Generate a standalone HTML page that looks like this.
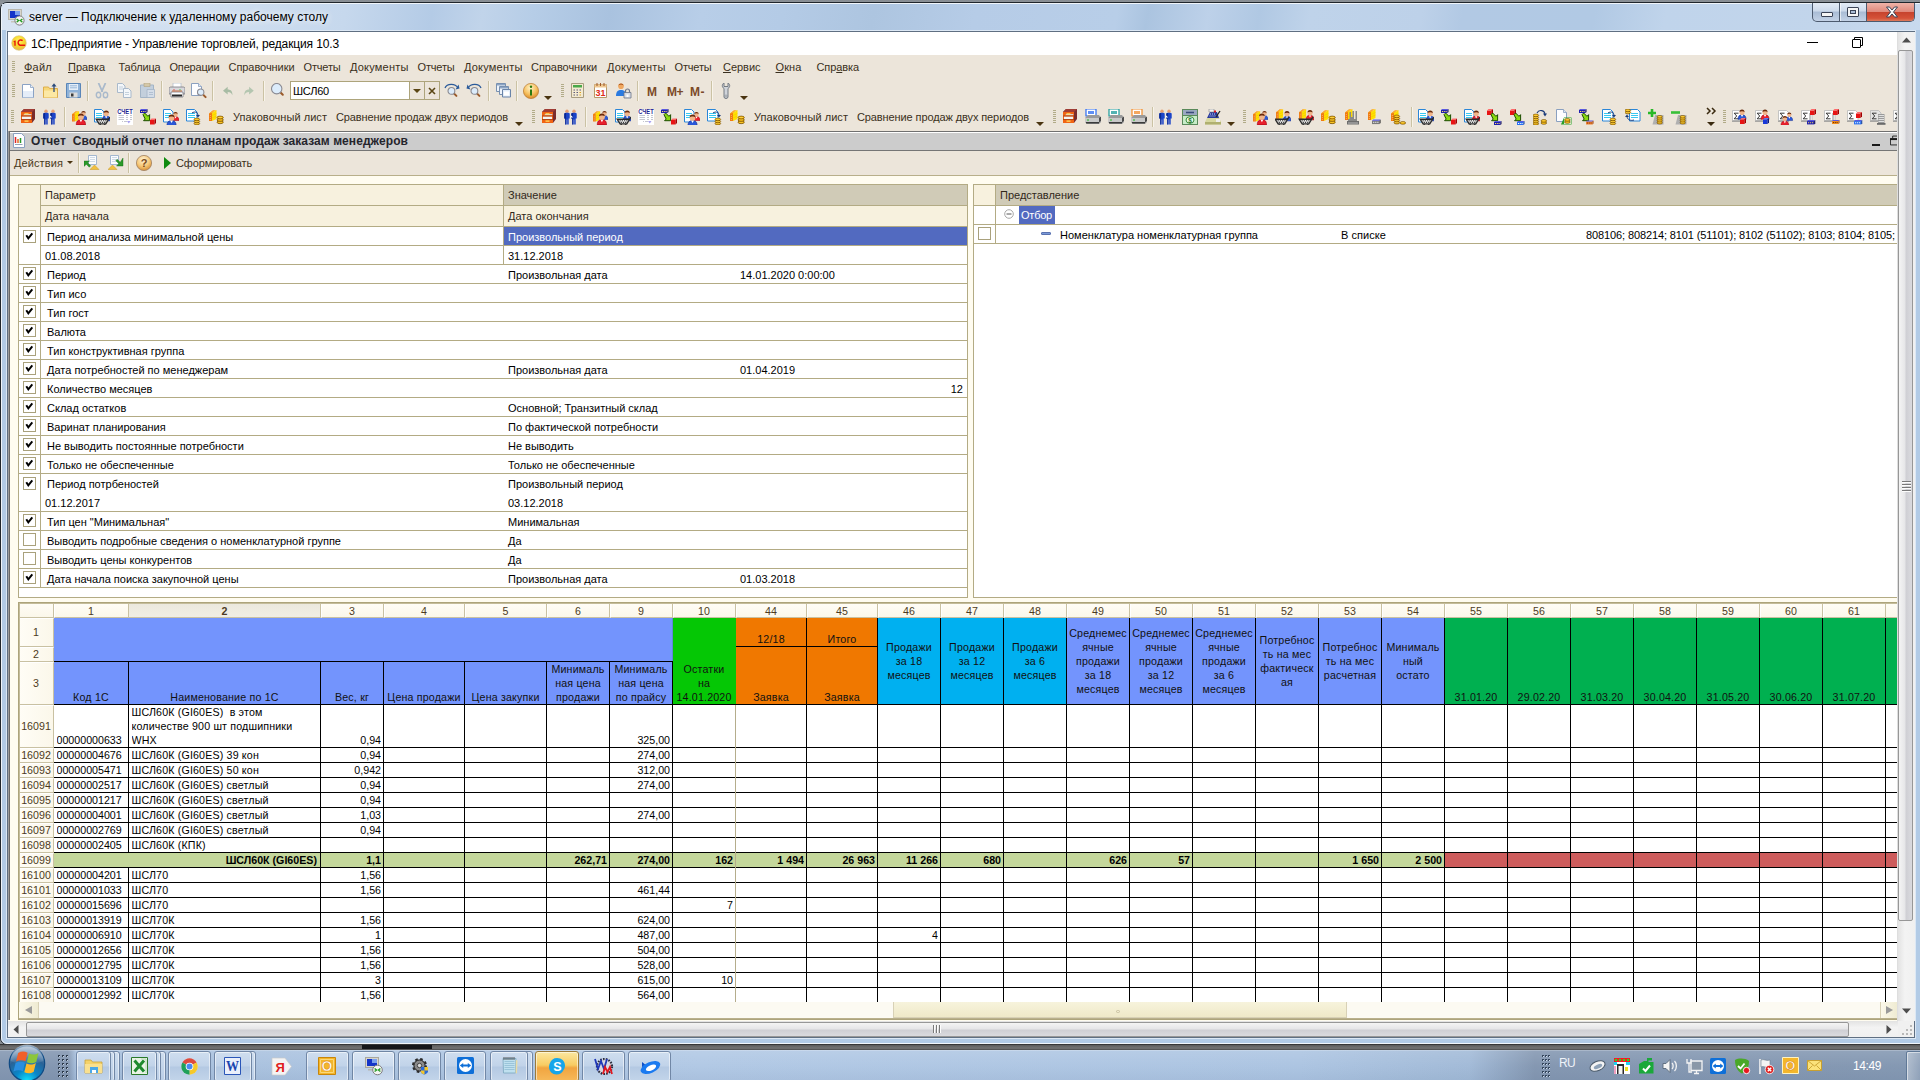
<!DOCTYPE html>
<html lang="ru"><head><meta charset="utf-8"><title>1С:Предприятие - Управление торговлей, редакция 10.3</title>
<style>
html,body{margin:0;padding:0;}
body{width:1920px;height:1080px;overflow:hidden;position:relative;background:#868c92;font-family:"Liberation Sans",sans-serif;font-size:11px;}
body div{position:absolute;box-sizing:border-box;}
.t{white-space:pre;}
svg{position:absolute;overflow:visible;}
.c{white-space:nowrap;font-size:10.67px;line-height:14px;color:#000;overflow:hidden;}
.ch{font-size:10.67px;line-height:14px;color:#111;text-align:center;display:flex;flex-direction:column;overflow:hidden;}
.ch span{display:block;white-space:nowrap;letter-spacing:.18px;}

</style></head>
<body>
<div style="left:0px;top:0px;width:1920px;height:3px;background:linear-gradient(180deg,#868c92,#8f959b);"></div>
<div style="left:0px;top:2px;width:1926px;height:1043px;background:#b2cbe6;border:1px solid #20262c;border-radius:7px;"></div>
<div style="left:1px;top:3px;width:1924px;height:1041px;border:1px solid rgba(255,255,255,.8);border-radius:6px;"></div>
<div style="left:2px;top:4px;width:1918px;height:26px;background:linear-gradient(100deg,#d8e4f3 0px,#d0dff0 200px,#c6d8ed 340px,#b4cbe6 425px,#c1d4ea 475px,#b6cde7 525px,#a9c2df 600px,#b8cee8 690px,#b4cbe6 770px,#adc5e0 860px,#b6cce7 960px,#b8cee8 1100px,#abc4e0 1130px,#bdd1e9 1190px,#b0c8e3 1240px,#bfd3ea 1290px,#bdd1e9 1400px,#b2c9e4 1440px,#b1c9e4 1570px,#c0d4eb 1640px,#c2d5eb 1800px,#cadbef 1918px);"></div>
<div style="left:6px;top:30px;width:1910px;height:1009px;border:1px solid #dce8f5;"></div>
<svg style="left:8px;top:9px" width="17" height="17" viewBox="0 0 17 17">
<rect x="0.5" y="0.5" width="13" height="10" fill="#d7d5cc" stroke="#b9b7ad"/>
<rect x="2" y="2" width="10" height="7" fill="#1434c8"/>
<rect x="7" y="2" width="5" height="4" fill="#7aa0ee"/>
<rect x="3" y="12" width="7" height="1.5" fill="#c8c6bd"/>
<circle cx="11.5" cy="11.5" r="4.6" fill="#f4f4f4" stroke="#7d7d7d"/>
<path d="M8.6 10l2 1.6-2 1.6M14.4 10l-2 1.6 2 1.6" stroke="#1f9a1f" stroke-width="1.3" fill="none"/>
</svg>
<div class="t" style="left:29px;top:9px;height:16px;line-height:16px;font-size:12px;color:#000;letter-spacing:0.007px;text-shadow:0 0 6px rgba(255,255,255,.9),0 0 10px rgba(255,255,255,.7);">server — Подключение к удаленному рабочему столу</div>
<div style="left:1812px;top:3px;width:103px;height:19px;border:1px solid #4c5a6e;border-top:none;border-radius:0 0 5px 5px;background:linear-gradient(180deg,#e3ebf5 0%,#ccd9ea 45%,#a9bcd5 50%,#c3d2e6 100%);overflow:hidden;"><div style="left:26px;top:0;width:1px;height:19px;background:#4c5a6e"></div><div style="left:27px;top:0;width:1px;height:19px;background:rgba(255,255,255,.6)"></div><div style="left:53px;top:0;width:1px;height:19px;background:#4c5a6e"></div><div style="left:54px;top:0;width:48px;height:19px;background:linear-gradient(180deg,#efb3a8 0%,#e08a7c 45%,#c7442e 50%,#d55238 80%,#e08a6a 100%)"></div><div style="left:8px;top:9px;width:12px;height:5px;background:#f5f5f5;border:1px solid #3b4356;border-radius:1px"></div><div style="left:34px;top:4px;width:12px;height:10px;background:#f5f5f5;border:1px solid #3b4356;border-radius:1px"></div><div style="left:37px;top:7px;width:6px;height:4px;background:#a9bcd5;border:1px solid #3b4356"></div></div>
<svg style="left:1885px;top:6px" width="14" height="12" viewBox="0 0 14 12"><path d="M1.5 1h3l2.5 3 2.5-3h3l-4 5 4 5h-3L7 8l-2.500 3h-3l4-5z" fill="#f7f7f7" stroke="#3b4356" stroke-width="1"/></svg>
<div style="left:7px;top:31px;width:1908px;height:1007px;background:#fff;border:1px solid #5f6f82;"></div>
<div style="left:8px;top:32px;width:1890px;height:23px;background:#fff;"></div>
<svg style="left:11px;top:35px" width="16" height="16" viewBox="0 0 16 16">
<defs><radialGradient id="g1c" cx="50%" cy="35%" r="65%"><stop offset="0" stop-color="#fff56a"/><stop offset=".55" stop-color="#f7d72a"/><stop offset="1" stop-color="#e9b64c"/></radialGradient></defs>
<circle cx="8" cy="8" r="7.3" fill="url(#g1c)" stroke="#d9c27a" stroke-width=".6"/>
<path d="M2.2 6.8l1.6-1.2h.9v5.2H3.300V7.200z" fill="#e8170c"/>
<path d="M11.600 5.600A2.700 2.700 0 1 0 9.000 10.200h5.200" stroke="#e8170c" stroke-width="1.500" fill="none"/>
</svg>
<div class="t" style="left:31px;top:35.5px;height:16px;line-height:16px;font-size:12px;color:#000;letter-spacing:-0.130px;">1С:Предприятие - Управление торговлей, редакция 10.3</div>
<div style="left:1807px;top:42px;width:11px;height:1px;background:#000;"></div>
<div style="left:1852px;top:39px;width:9px;height:9px;border:1px solid #000;background:#fff;border-radius:1px;"></div>
<svg style="left:1854px;top:37px" width="9" height="9" viewBox="0 0 9 9"><path d="M0.500 2V.5H8.500V8.500H7" fill="none" stroke="#000"/></svg>
<div style="left:8px;top:55px;width:1890px;height:76px;background:#ece5da;"></div>
<div style="left:12px;top:61px;width:3px;height:1px;background:#b1ab88;"></div>
<div style="left:12px;top:63px;width:3px;height:1px;background:#b1ab88;"></div>
<div style="left:12px;top:65px;width:3px;height:1px;background:#b1ab88;"></div>
<div style="left:12px;top:67px;width:3px;height:1px;background:#b1ab88;"></div>
<div style="left:12px;top:69px;width:3px;height:1px;background:#b1ab88;"></div>
<div style="left:12px;top:71px;width:3px;height:1px;background:#b1ab88;"></div>
<div class="t" style="left:24px;top:59px;height:16px;line-height:16px;font-size:11px;color:#3a3020;letter-spacing:0.239px"><u>Ф</u>айл</div>
<div class="t" style="left:68px;top:59px;height:16px;line-height:16px;font-size:11px;color:#3a3020;letter-spacing:-0.026px"><u>П</u>равка</div>
<div class="t" style="left:118.5px;top:59px;height:16px;line-height:16px;font-size:11px;color:#3a3020;letter-spacing:-0.161px">Таблица</div>
<div class="t" style="left:169.5px;top:59px;height:16px;line-height:16px;font-size:11px;color:#3a3020;letter-spacing:-0.182px">Операции</div>
<div class="t" style="left:228.5px;top:59px;height:16px;line-height:16px;font-size:11px;color:#3a3020;letter-spacing:-0.058px">Справочники</div>
<div class="t" style="left:303.5px;top:59px;height:16px;line-height:16px;font-size:11px;color:#3a3020;letter-spacing:-0.171px">Отчеты</div>
<div class="t" style="left:350px;top:59px;height:16px;line-height:16px;font-size:11px;color:#3a3020;letter-spacing:0.200px">Документы</div>
<div class="t" style="left:417.5px;top:59px;height:16px;line-height:16px;font-size:11px;color:#3a3020;letter-spacing:-0.171px">Отчеты</div>
<div class="t" style="left:464px;top:59px;height:16px;line-height:16px;font-size:11px;color:#3a3020;letter-spacing:0.200px">Документы</div>
<div class="t" style="left:531px;top:59px;height:16px;line-height:16px;font-size:11px;color:#3a3020;letter-spacing:-0.058px">Справочники</div>
<div class="t" style="left:607px;top:59px;height:16px;line-height:16px;font-size:11px;color:#3a3020;letter-spacing:0.200px">Документы</div>
<div class="t" style="left:674.5px;top:59px;height:16px;line-height:16px;font-size:11px;color:#3a3020;letter-spacing:-0.171px">Отчеты</div>
<div class="t" style="left:723px;top:59px;height:16px;line-height:16px;font-size:11px;color:#3a3020;letter-spacing:-0.028px"><u>С</u>ервис</div>
<div class="t" style="left:775.5px;top:59px;height:16px;line-height:16px;font-size:11px;color:#3a3020;letter-spacing:0.110px"><u>О</u>кна</div>
<div class="t" style="left:816.5px;top:59px;height:16px;line-height:16px;font-size:11px;color:#3a3020;letter-spacing:-0.093px">Спр<u>а</u>вка</div>
<div style="left:12px;top:84px;width:3px;height:1px;background:#b1ab88;"></div>
<div style="left:12px;top:86px;width:3px;height:1px;background:#b1ab88;"></div>
<div style="left:12px;top:88px;width:3px;height:1px;background:#b1ab88;"></div>
<div style="left:12px;top:90px;width:3px;height:1px;background:#b1ab88;"></div>
<div style="left:12px;top:92px;width:3px;height:1px;background:#b1ab88;"></div>
<div style="left:12px;top:94px;width:3px;height:1px;background:#b1ab88;"></div>
<div style="left:12px;top:96px;width:3px;height:1px;background:#b1ab88;"></div>
<svg style="left:20px;top:83px;overflow:hidden" width="16" height="16" viewBox="0 0 16 16"><g transform="translate(2 1) scale(1)"><path d="M.5 .5h8l3 3v10h-11z" fill="#fff" stroke="#8aa2c4" stroke-width="1"/><path d="M1 7h10v6.500h-10z" fill="#dfe9f6" opacity=".8"/><path d="M8.500 .5v3h3" fill="#eaf0f8" stroke="#8aa2c4" stroke-width=".8"/></g></svg>
<svg style="left:43px;top:83px;overflow:hidden" width="16" height="16" viewBox="0 0 16 16"><path d="M.5 4h5l1 1.500h8v9h-14z" fill="#f7d778" stroke="#dba840" stroke-width=".9"/><path d="M1 7.500h13v7h-13z" fill="#fce8a4"/><path d="M11 9v-7" stroke="#2a4a7a" stroke-width="1.300"/><path d="M8.500 3.500l2.500-3.300 2.500 3.300z" fill="#2a4a7a"/></svg>
<svg style="left:66px;top:83px;overflow:hidden" width="16" height="16" viewBox="0 0 16 16"><path d="M.5 .5h14v14h-14z" fill="#8fb2d8" stroke="#5a86b8"/><path d="M3 1h9v6h-9z" fill="#e6eff8"/><path d="M4 2.800h7M4 4.800h7" stroke="#8fb0d4" stroke-width=".9"/><path d="M3.500 9.500h8v5h-8z" fill="#dcdcdc"/><path d="M5 10.500h2.500v3h-2.500z" fill="#3a3a3a"/></svg>
<div style="left:87px;top:81px;width:1px;height:20px;background:#cbc2a4;"></div>
<div style="left:88px;top:81px;width:1px;height:20px;background:#f8f4ea;"></div>
<svg style="left:95px;top:83px;overflow:hidden" width="16" height="16" viewBox="0 0 16 16"><path d="M3.500 0l4 9M10.500 0l-4 9" stroke="#a9b9cb" stroke-width="1.800"/><ellipse cx="3.500" cy="12" rx="2.200" ry="2.800" fill="none" stroke="#a9b9cb" stroke-width="1.400"/><ellipse cx="10.500" cy="12" rx="2.200" ry="2.800" fill="none" stroke="#a9b9cb" stroke-width="1.400"/></svg>
<svg style="left:117px;top:83px;overflow:hidden" width="16" height="16" viewBox="0 0 16 16"><path d="M.5 .5h5l2.500 2.500v6.500h-7.500z" fill="#f4f7fa" stroke="#a9b9cb"/><path d="M6.500 5.500h5l2.500 2.500v6.500h-7.500z" fill="#f4f7fa" stroke="#a9b9cb"/><path d="M2 4h4M2 6h4M8 9.500h4M8 11.500h4" stroke="#b8c6d6" stroke-width=".8"/></svg>
<svg style="left:140px;top:83px;overflow:hidden" width="16" height="16" viewBox="0 0 16 16"><path d="M.5 2h13v12.500h-13z" fill="#c3cfdc" stroke="#a3b4c6"/><path d="M4 0h6v3.500h-6z" fill="#d4c8a8" stroke="#b4a888" stroke-width=".7"/><path d="M7 6.500h7.500v8h-7.500z" fill="#d4dde8" stroke="#a3b4c6" stroke-width=".8"/><path d="M9 9.500h4M9 11.500h4" stroke="#a9b9cb" stroke-width=".8"/></svg>
<div style="left:161px;top:81px;width:1px;height:20px;background:#cbc2a4;"></div>
<div style="left:162px;top:81px;width:1px;height:20px;background:#f8f4ea;"></div>
<svg style="left:169px;top:83px;overflow:hidden" width="16" height="16" viewBox="0 0 16 16"><path d="M4 0h8v6h-8z" fill="#fff" stroke="#b8c0cc" stroke-width=".8"/><path d="M0 5.500c0-1 1-1.500 2-1.500h12c1 0 2 .5 2 1.500v5.500h-16z" fill="#d8d8dc" stroke="#6a6a72" stroke-width=".7"/><path d="M2 9h12v5h-12z" fill="#fff" stroke="#6a6a72" stroke-width=".7"/><path d="M3 11.500h10v2h-10z" fill="#2a2a2a"/><path d="M3 8h10" stroke="#c86a3a" stroke-width="1"/><path d="M10.500 6.800h1" stroke="#20c020" stroke-width="1"/><path d="M4.500 6.800h1" stroke="#e02020" stroke-width="1"/></svg>
<svg style="left:191px;top:83px;overflow:hidden" width="16" height="16" viewBox="0 0 16 16"><g transform="translate(0 0) scale(1)"><path d="M.5 .5h7l3 3v9h-10z" fill="#fdfdff" stroke="#8aa0c0" stroke-width="1"/><path d="M7.5 .5v3h3" fill="#dfe8f4" stroke="#8aa0c0" stroke-width=".8"/></g><g transform="translate(6.5 6)"><path d="M5.1 5.1l3 3" stroke="#9a5a2a" stroke-width="2" stroke-linecap="round"/><circle cx="3.2" cy="3.2" r="3.2" fill="#dcecfb" stroke="#8a8a92" stroke-width="1.100"/></g></svg>
<div style="left:212px;top:81px;width:1px;height:20px;background:#cbc2a4;"></div>
<div style="left:213px;top:81px;width:1px;height:20px;background:#f8f4ea;"></div>
<svg style="left:222px;top:85px;overflow:hidden" width="16" height="16" viewBox="0 0 16 16"><path transform="translate(1 1) scale(.85)" d="M0 5.500l5.500-4.500v3c4 0 6 2.500 5.500 7-1-3-2.500-4-5.500-4v3z" fill="#a8bca4"/></svg>
<svg style="left:243px;top:85px;overflow:hidden" width="16" height="16" viewBox="0 0 16 16"><path transform="translate(1 1) scale(.85)" d="M11.500 5.500l-5.500-4.500v3c-4 0-6 2.500-5.500 7 1-3 2.500-4 5.500-4v3z" fill="#b4c6b0"/></svg>
<div style="left:263px;top:81px;width:1px;height:20px;background:#cbc2a4;"></div>
<div style="left:264px;top:81px;width:1px;height:20px;background:#f8f4ea;"></div>
<svg style="left:271px;top:83px;overflow:hidden" width="16" height="16" viewBox="0 0 16 16"><g transform="translate(0.5 0.5)"><path d="M8.3 8.3l3 3" stroke="#9a5a2a" stroke-width="2" stroke-linecap="round"/><circle cx="5.2" cy="5.2" r="5.2" fill="#dcecfb" stroke="#8a8a92" stroke-width="1.100"/></g></svg>
<div style="left:290px;top:81px;width:150px;height:19px;background:#fff;border:1px solid #ada47b;"></div>
<div style="left:409px;top:82px;width:30px;height:17px;background:#ece5da;"></div>
<div style="left:409px;top:82px;width:1px;height:17px;background:#ada47b;"></div>
<div style="left:424px;top:82px;width:1px;height:17px;background:#ada47b;"></div>
<div class="t" style="left:293px;top:83px;height:16px;line-height:16px;font-size:11px;color:#000;letter-spacing:-0.223px;">ШСЛ60</div>
<svg style="left:413px;top:89px" width="8" height="4" viewBox="0 0 8 4"><path d="M0 0h8l-4 4z" fill="#5a4614"/></svg>
<svg style="left:428px;top:87px" width="8" height="8" viewBox="0 0 8 8"><path d="M1 1l6 6M7 1l-6 6" stroke="#5a4614" stroke-width="1.600"/></svg>
<svg style="left:444px;top:83px;overflow:hidden" width="16" height="16" viewBox="0 0 16 16"><path d="M1 5c2-4.500 10-5 13 0" fill="none" stroke="#2a5a9a" stroke-width="1.300"/><path d="M11.500 6.500l4-1-1-4z" fill="#2a5a9a"/><g transform="translate(4 4.5)"><path d="M5.4 5.4l3 3" stroke="#9a5a2a" stroke-width="2" stroke-linecap="round"/><circle cx="3.4" cy="3.4" r="3.4" fill="#dcecfb" stroke="#8a8a92" stroke-width="1.100"/></g></svg>
<svg style="left:466px;top:83px;overflow:hidden" width="16" height="16" viewBox="0 0 16 16"><path d="M2 5c3-5 11-4.500 13 0" fill="none" stroke="#2a5a9a" stroke-width="1.300"/><path d="M4.500 6.500l-4-1 1-4z" fill="#2a5a9a"/><g transform="translate(5 4.5)"><path d="M5.4 5.4l3 3" stroke="#9a5a2a" stroke-width="2" stroke-linecap="round"/><circle cx="3.4" cy="3.4" r="3.4" fill="#dcecfb" stroke="#8a8a92" stroke-width="1.100"/></g></svg>
<div style="left:488px;top:81px;width:1px;height:20px;background:#cbc2a4;"></div>
<div style="left:489px;top:81px;width:1px;height:20px;background:#f8f4ea;"></div>
<svg style="left:496px;top:83px;overflow:hidden" width="16" height="16" viewBox="0 0 16 16"><path d="M.5 .5h9v8h-9z" fill="#eef3fa" stroke="#7890b0"/><path d="M1 1h8v1.500h-8z" fill="#8ca4c4"/><path d="M3.500 3.500h9v8h-9z" fill="#eef3fa" stroke="#7890b0"/><path d="M4 4h8v1.500h-8z" fill="#8ca4c4"/><path d="M6.500 6.500h8v7.500h-8z" fill="#e3edf9" stroke="#6a84a8"/><path d="M8 8.500h5v4h-5z" fill="#fff"/></svg>
<div style="left:516px;top:81px;width:1px;height:20px;background:#cbc2a4;"></div>
<div style="left:517px;top:81px;width:1px;height:20px;background:#f8f4ea;"></div>
<svg style="left:523px;top:83px;overflow:hidden" width="16" height="16" viewBox="0 0 16 16"><defs><radialGradient id="gi" cx="45%" cy="30%" r="70%"><stop offset="0" stop-color="#fff3c8"/><stop offset=".6" stop-color="#f6c060"/><stop offset="1" stop-color="#d88a28"/></radialGradient></defs><circle cx="8" cy="8" r="7.600" fill="url(#gi)" stroke="#b87a30" stroke-width=".7"/><path d="M8 6.500v6" stroke="#2a7a10" stroke-width="2"/><circle cx="8" cy="3.800" r="1.200" fill="#2a7a10"/></svg>
<svg style="left:544px;top:96px" width="8" height="4" viewBox="0 0 8 4"><path d="M0 0h8l-4 4z" fill="#4a3410"/></svg>
<div style="left:561px;top:84px;width:3px;height:1px;background:#b1ab88;"></div>
<div style="left:561px;top:86px;width:3px;height:1px;background:#b1ab88;"></div>
<div style="left:561px;top:88px;width:3px;height:1px;background:#b1ab88;"></div>
<div style="left:561px;top:90px;width:3px;height:1px;background:#b1ab88;"></div>
<div style="left:561px;top:92px;width:3px;height:1px;background:#b1ab88;"></div>
<div style="left:561px;top:94px;width:3px;height:1px;background:#b1ab88;"></div>
<div style="left:561px;top:96px;width:3px;height:1px;background:#b1ab88;"></div>
<svg style="left:571px;top:83px;overflow:hidden" width="16" height="16" viewBox="0 0 16 16"><path d="M.5 .5h12v14h-12z" fill="#f4ead0" stroke="#a89c80"/><path d="M2 2h9v2.500h-9z" fill="#4aa84a"/><path d="M2.500 7h1.500M5.500 7h1.500M8.500 7h1.500M2.500 9.500h1.500M5.500 9.500h1.500M2.500 12h1.500M5.500 12h1.500" stroke="#5a5a7a" stroke-width="1.200"/><path d="M8.500 9.500h1.500M8.500 12h1.500" stroke="#d8a020" stroke-width="1.200"/></svg>
<svg style="left:594px;top:83px;overflow:hidden" width="16" height="16" viewBox="0 0 16 16"><path d="M.5 1.500h12v13h-12z" fill="#fff" stroke="#b89868"/><path d="M.5 1.500h12v3h-12z" fill="#f0c890"/><path d="M3 0v3M6.500 0v3M10 0v3" stroke="#a05828" stroke-width="1"/><text x="1.500" y="13" font-family="Liberation Sans,sans-serif" font-size="9" font-weight="bold" fill="#e02818" textLength="10" lengthAdjust="spacingAndGlyphs">31</text></svg>
<svg style="left:616px;top:83px;overflow:hidden" width="16" height="16" viewBox="0 0 16 16"><circle cx="5" cy="3.200" r="2.800" fill="#f0a860"/><path d="M2.300 2.500a2.800 2.800 0 0 1 5.400 0c-1.500-1.200-4-1.200-5.400 0z" fill="#a04810"/><path d="M0 13c0-4.500 2-6 5-6s5 1.500 5 6z" fill="#2a7ae0"/><path d="M8 9.500h7v5.500h-7z" fill="#d8dce4" stroke="#6a7488" stroke-width=".8"/><path d="M9.500 9.500v-1.500a2 2 0 0 1 4 0v1.500" fill="none" stroke="#6a7488" stroke-width="1.200"/><path d="M10.500 11.500h2v2.500h-2z" fill="#fff"/></svg>
<div style="left:637px;top:81px;width:1px;height:20px;background:#cbc2a4;"></div>
<div style="left:638px;top:81px;width:1px;height:20px;background:#f8f4ea;"></div>
<div class="t" style="left:647px;top:83.5px;height:16px;line-height:16px;font-size:12px;color:#7b4a28;font-weight:bold;letter-spacing:-0.997px;">M</div>
<div class="t" style="left:667px;top:83.5px;height:16px;line-height:16px;font-size:12px;color:#7b4a28;font-weight:bold;letter-spacing:-0.502px;">M+</div>
<div class="t" style="left:690px;top:83.5px;height:16px;line-height:16px;font-size:12px;color:#7b4a28;font-weight:bold;letter-spacing:0.503px;">M-</div>
<div style="left:711px;top:81px;width:1px;height:20px;background:#cbc2a4;"></div>
<div style="left:712px;top:81px;width:1px;height:20px;background:#f8f4ea;"></div>
<svg style="left:721px;top:83px;overflow:hidden" width="16" height="16" viewBox="0 0 16 16"><path d="M3 0c-2 1-2.500 4 0 5.500v8.500c0 2 4 2 4 0v-8.500c2.500-1.500 2-4.500 0-5.500v3.500h-4z" fill="#d0d4da" stroke="#6a7078" stroke-width=".9"/><circle cx="5" cy="13" r="1" fill="#fff" stroke="#6a7078" stroke-width=".6"/></svg>
<svg style="left:740px;top:96px" width="8" height="4" viewBox="0 0 8 4"><path d="M0 0h8l-4 4z" fill="#4a3410"/></svg>
<div style="left:11px;top:110px;width:3px;height:1px;background:#b1ab88;"></div>
<div style="left:11px;top:112px;width:3px;height:1px;background:#b1ab88;"></div>
<div style="left:11px;top:114px;width:3px;height:1px;background:#b1ab88;"></div>
<div style="left:11px;top:116px;width:3px;height:1px;background:#b1ab88;"></div>
<div style="left:11px;top:118px;width:3px;height:1px;background:#b1ab88;"></div>
<div style="left:11px;top:120px;width:3px;height:1px;background:#b1ab88;"></div>
<div style="left:11px;top:122px;width:3px;height:1px;background:#b1ab88;"></div>
<svg style="left:20px;top:109px;overflow:hidden" width="16" height="16" viewBox="0 0 16 16"><path d="M1 3l3-3h11v10l-3 4h-11z" fill="#7a2c2c"/><path d="M1 3h11v11h-11z" fill="#f06414"/><path d="M1 3l3-3h11l-3 3z" fill="#a03c34"/><path d="M2 7.500h9v2.600h-9z" fill="#f4f4f4"/><path d="M3 6.200l1.500-1.200h7l-.5 1.200z" fill="#d8d8d8"/><path d="M4.500 4.800h4M4.500 12.200h4" stroke="#ffe060" stroke-width="1.200"/><path d="M1 7h11M1 10.500h11" stroke="#8a2a08" stroke-width=".6"/></svg>
<svg style="left:42px;top:109px;overflow:hidden" width="16" height="16" viewBox="0 0 16 16"><g transform="translate(1 0.5) scale(1)"><g transform="translate(0 0)"><circle cx="3" cy="1.800" r="1.700" fill="#e8a070"/><path d="M.3 4.500c0-1 .8-1.200 2.700-1.200s2.700.2 2.700 1.200v4.500h-1v6h-1.500v-5h-.5v5h-1.500v-6h-1z" fill="#1c44c8"/><path d="M.3 4.500v4.500h1v6h.8v-11.600c-1.200 0-1.800.4-1.800 1.100z" fill="#0c2890"/></g><g transform="translate(7 0)"><circle cx="3" cy="1.800" r="1.700" fill="#e8a070"/><path d="M.3 4.500c0-1 .8-1.200 2.700-1.200s2.700.2 2.700 1.200v4.500h-1v6h-1.500v-5h-.5v5h-1.500v-6h-1z" fill="#1c44c8"/><path d="M.3 4.500v4.500h1v6h.8v-11.600c-1.200 0-1.800.4-1.800 1.100z" fill="#0c2890"/></g><path d="M6 8l1.500-2 1.500 2z" fill="#fff"/></g></svg>
<div style="left:64px;top:107px;width:1px;height:20px;background:#cbc2a4;"></div>
<div style="left:65px;top:107px;width:1px;height:20px;background:#f8f4ea;"></div>
<svg style="left:71px;top:109px;overflow:hidden" width="16" height="16" viewBox="0 0 16 16"><g transform="translate(1 2) scale(0.95)"><path d="M0 3.500l4.500-3.500v2l-1.500 1v8h-3z" fill="#f07c12"/><path d="M3 3l4.500-3v9l-4.500 2z" fill="#ffe000"/><path d="M0 3.500l4.500-3.500h3l-4.500 3z" fill="#ffb830" opacity=".85"/><path d="M.8 5.500h1.200M.8 7.500h1.200M.8 9.500h1.200" stroke="#ffb060" stroke-width=".8"/><path d="M3 5.500l4.500-2M3 8l4.500-2" stroke="#f0c000" stroke-width=".5"/></g><g transform="translate(9 1.5) scale(1.0)"><path d="M0 9c0-3 1.500-4 3.500-4s3.500 1 3.500 4z" fill="#2a58d8" stroke="#102890" stroke-width=".5"/><circle cx="3.500" cy="3" r="2.200" fill="#f2b58a"/><path d="M1.300 2.600a2.200 2.200 0 0 1 4.400 0c-1-1-3.400-1-4.400 0z" fill="#6a2a0c"/><path d="M2.500 5.200l1 1.800 1-1.800z" fill="#fff"/></g><g transform="translate(5.3 4) scale(1.32)"><path d="M0 9c0-3 1.500-4 3.500-4s3.500 1 3.500 4z" fill="#e8202c" stroke="#a00010" stroke-width=".5"/><circle cx="3.500" cy="3" r="2.200" fill="#f2b58a"/><path d="M1.300 2.600a2.200 2.200 0 0 1 4.400 0c-1-1-3.400-1-4.400 0z" fill="#6a2a0c"/><path d="M2.500 5.200l1 1.800 1-1.800z" fill="#fff"/></g></svg>
<svg style="left:94px;top:109px;overflow:hidden" width="16" height="16" viewBox="0 0 16 16"><g transform="translate(0 0) scale(1)"><path d="M.5 .5h7l2.500 2.500v10h-9.5z" fill="#fff" stroke="#2a86d8" stroke-width="1"/><path d="M2 4.5h6" stroke="#38c8f0" stroke-width="1"/><path d="M2 6.5h6" stroke="#38c8f0" stroke-width="1"/><path d="M2 8.5h6" stroke="#38c8f0" stroke-width="1"/></g><g transform="translate(8 1) scale(1.2)"><path d="M0 9c0-3 1.500-4 3.500-4s3.500 1 3.500 4z" fill="#2a58d8" stroke="#102890" stroke-width=".5"/><circle cx="3.500" cy="3" r="2.200" fill="#f2b58a"/><path d="M1.300 2.600a2.200 2.200 0 0 1 4.400 0c-1-1-3.400-1-4.400 0z" fill="#6a2a0c"/><path d="M2.500 5.200l1 1.800 1-1.800z" fill="#fff"/></g><g transform="translate(2 10) scale(1.4)"><path d="M.2 .2h8.800l-2 3.300h-4.800z" fill="#f2f2f2" stroke="#2c2c2c" stroke-width="1"/><path d="M1.800 1.200h.9M3.400 1.200h.9M5 1.200h.9M6.600 1.200h.9M2.600 2.400h.9M4.200 2.400h.9M5.800 2.400h.9" stroke="#3a3a3a" stroke-width=".75"/><circle cx="3" cy="4.300" r=".65" fill="#2c2c2c"/><circle cx="6.200" cy="4.300" r=".65" fill="#2c2c2c"/><path d="M8.600 .4l1.600-1.900" stroke="#2c2c2c" stroke-width="1"/></g></svg>
<svg style="left:117px;top:109px;overflow:hidden" width="16" height="16" viewBox="0 0 16 16"><path d="M0 0h16v16h-16z" fill="#fff"/><text x=".3" y="5.300" font-family="Liberation Sans,sans-serif" font-weight="bold" font-size="6.800" fill="#1c1c90" textLength="15.400" lengthAdjust="spacingAndGlyphs">СЧЕТ</text><path d="M1.500 6.500h5.500M9 6.500h2M13 6.500h2M1.500 8.500h5.500M9 8.500h2M13 8.500h2M1.500 10.500h5.500M9 10.500h2M13 10.500h2M5 12.500h1M7 12.500h3" stroke="#c4c6d0" stroke-width="1"/><path d="M10 12h3.500l-1.750 2.500z" fill="#a8a0f0"/></svg>
<svg style="left:140px;top:109px;overflow:hidden" width="16" height="16" viewBox="0 0 16 16"><g transform="translate(0 0) scale(1)"><path d="M0 1h6.500v3h-6.500z" fill="#2020b0"/><path d="M0 1l1-1h6.500l-1 1z" fill="#5a5ae0"/><path d="M6.500 1l1-1v3l-1 1z" fill="#080850"/><path d="M1 2.500h1M2.800 2.500h1M4.600 2.500h1" stroke="#ffe060" stroke-width="1"/></g><g transform="translate(3 4) scale(1.1)"><path d="M0 1.500l1.500-1.500 3 3 1.500-1.500v5.500h-5.500l1.500-1.500z" fill="#8ada10" stroke="#1a4a00" stroke-width=".9"/></g><g transform="translate(10 9.5) scale(1)"><path d="M0 1.500h4.500v4.500h-4.500z" fill="#e81414"/><path d="M0 1.500l1.500-1.500h4.500l-1.500 1.500z" fill="#ff6a6a"/><path d="M4.500 1.500l1.500-1.500v4.500l-1.500 1.500z" fill="#a00000"/></g></svg>
<svg style="left:163px;top:109px;overflow:hidden" width="16" height="16" viewBox="0 0 16 16"><g transform="translate(0 0) scale(1)"><path d="M.5 .5h7l2.500 2.500v10h-9.5z" fill="#fff" stroke="#2a86d8" stroke-width="1"/><path d="M2 4.5h6" stroke="#38c8f0" stroke-width="1"/><path d="M2 6.5h6" stroke="#38c8f0" stroke-width="1"/><path d="M2 8.5h6" stroke="#38c8f0" stroke-width="1"/></g><g transform="translate(9 2.5) scale(1.0)"><path d="M0 9c0-3 1.500-4 3.500-4s3.500 1 3.500 4z" fill="#e8202c" stroke="#a00010" stroke-width=".5"/><circle cx="3.500" cy="3" r="2.200" fill="#f2b58a"/><path d="M1.300 2.600a2.200 2.200 0 0 1 4.400 0c-1-1-3.400-1-4.400 0z" fill="#6a2a0c"/><path d="M2.500 5.200l1 1.800 1-1.800z" fill="#fff"/></g><g transform="translate(4 5) scale(1.3)"><path d="M0 9c0-3 1.500-4 3.500-4s3.500 1 3.500 4z" fill="#2a58d8" stroke="#102890" stroke-width=".5"/><circle cx="3.500" cy="3" r="2.200" fill="#f2b58a"/><path d="M1.300 2.600a2.200 2.200 0 0 1 4.400 0c-1-1-3.400-1-4.400 0z" fill="#6a2a0c"/><path d="M2.500 5.200l1 1.800 1-1.800z" fill="#fff"/></g></svg>
<svg style="left:186px;top:109px;overflow:hidden" width="16" height="16" viewBox="0 0 16 16"><g transform="translate(0 0) scale(1)"><path d="M.5 .5h8l2.500 2.500v9h-10.5z" fill="#fff" stroke="#2a86d8" stroke-width="1"/><path d="M2 4.5h7" stroke="#38c8f0" stroke-width="1"/><path d="M2 6.5h7" stroke="#38c8f0" stroke-width="1"/><path d="M2 8.5h7" stroke="#38c8f0" stroke-width="1"/></g><path d="M6 4c3-2 6-1 6 3" fill="none" stroke="#1a3a7a" stroke-width="1"/><path d="M10 6l2 2.500 2-2.500z" fill="#1a3a7a"/><g transform="translate(8 9) scale(0.95)"><ellipse cx="3" cy="5.9" rx="3" ry="1.400" fill="#f6b400" stroke="#5a3800" stroke-width=".6"/><path d="M1.200 5.7h3.600" stroke="#ffe880" stroke-width=".6"/><ellipse cx="3" cy="3.7" rx="3" ry="1.400" fill="#f6b400" stroke="#5a3800" stroke-width=".6"/><path d="M1.200 3.5h3.600" stroke="#ffe880" stroke-width=".6"/><ellipse cx="3" cy="1.5" rx="3" ry="1.400" fill="#f6b400" stroke="#5a3800" stroke-width=".6"/><path d="M1.200 1.3h3.600" stroke="#ffe880" stroke-width=".6"/></g></svg>
<svg style="left:209px;top:109px;overflow:hidden" width="16" height="16" viewBox="0 0 16 16"><g transform="translate(0 1) scale(1)"><path d="M0 3.500l4.500-3.500v2l-1.500 1v8h-3z" fill="#f07c12"/><path d="M3 3l4.500-3v9l-4.500 2z" fill="#ffe000"/><path d="M0 3.500l4.500-3.500h3l-4.500 3z" fill="#ffb830" opacity=".85"/><path d="M.8 5.500h1.200M.8 7.500h1.200M.8 9.500h1.200" stroke="#ffb060" stroke-width=".8"/><path d="M3 5.500l4.500-2M3 8l4.500-2" stroke="#f0c000" stroke-width=".5"/></g><g transform="translate(8 7) scale(1.05)"><ellipse cx="3" cy="5.9" rx="3" ry="1.400" fill="#f6b400" stroke="#5a3800" stroke-width=".6"/><path d="M1.200 5.7h3.600" stroke="#ffe880" stroke-width=".6"/><ellipse cx="3" cy="3.7" rx="3" ry="1.400" fill="#f6b400" stroke="#5a3800" stroke-width=".6"/><path d="M1.200 3.5h3.600" stroke="#ffe880" stroke-width=".6"/><ellipse cx="3" cy="1.5" rx="3" ry="1.400" fill="#f6b400" stroke="#5a3800" stroke-width=".6"/><path d="M1.200 1.3h3.600" stroke="#ffe880" stroke-width=".6"/></g></svg>
<div class="t" style="left:233px;top:109px;height:16px;line-height:16px;font-size:11px;color:#3a3020;letter-spacing:0.048px;">Упаковочный лист</div>
<div class="t" style="left:336px;top:109px;height:16px;line-height:16px;font-size:11px;color:#3a3020;letter-spacing:-0.106px;">Сравнение продаж двух периодов</div>
<svg style="left:515px;top:122px" width="8" height="4" viewBox="0 0 8 4"><path d="M0 0h8l-4 4z" fill="#4a3410"/></svg>
<div style="left:532px;top:110px;width:3px;height:1px;background:#b1ab88;"></div>
<div style="left:532px;top:112px;width:3px;height:1px;background:#b1ab88;"></div>
<div style="left:532px;top:114px;width:3px;height:1px;background:#b1ab88;"></div>
<div style="left:532px;top:116px;width:3px;height:1px;background:#b1ab88;"></div>
<div style="left:532px;top:118px;width:3px;height:1px;background:#b1ab88;"></div>
<div style="left:532px;top:120px;width:3px;height:1px;background:#b1ab88;"></div>
<div style="left:532px;top:122px;width:3px;height:1px;background:#b1ab88;"></div>
<svg style="left:541px;top:109px;overflow:hidden" width="16" height="16" viewBox="0 0 16 16"><path d="M1 3l3-3h11v10l-3 4h-11z" fill="#7a2c2c"/><path d="M1 3h11v11h-11z" fill="#f06414"/><path d="M1 3l3-3h11l-3 3z" fill="#a03c34"/><path d="M2 7.500h9v2.600h-9z" fill="#f4f4f4"/><path d="M3 6.200l1.500-1.200h7l-.5 1.200z" fill="#d8d8d8"/><path d="M4.500 4.800h4M4.500 12.200h4" stroke="#ffe060" stroke-width="1.200"/><path d="M1 7h11M1 10.500h11" stroke="#8a2a08" stroke-width=".6"/></svg>
<svg style="left:563px;top:109px;overflow:hidden" width="16" height="16" viewBox="0 0 16 16"><g transform="translate(1 0.5) scale(1)"><g transform="translate(0 0)"><circle cx="3" cy="1.800" r="1.700" fill="#e8a070"/><path d="M.3 4.500c0-1 .8-1.200 2.700-1.200s2.700.2 2.700 1.200v4.500h-1v6h-1.500v-5h-.5v5h-1.500v-6h-1z" fill="#1c44c8"/><path d="M.3 4.500v4.500h1v6h.8v-11.600c-1.200 0-1.800.4-1.800 1.100z" fill="#0c2890"/></g><g transform="translate(7 0)"><circle cx="3" cy="1.800" r="1.700" fill="#e8a070"/><path d="M.3 4.500c0-1 .8-1.200 2.700-1.200s2.700.2 2.700 1.200v4.500h-1v6h-1.500v-5h-.5v5h-1.500v-6h-1z" fill="#1c44c8"/><path d="M.3 4.500v4.500h1v6h.8v-11.600c-1.200 0-1.800.4-1.800 1.100z" fill="#0c2890"/></g><path d="M6 8l1.500-2 1.500 2z" fill="#fff"/></g></svg>
<div style="left:585px;top:107px;width:1px;height:20px;background:#cbc2a4;"></div>
<div style="left:586px;top:107px;width:1px;height:20px;background:#f8f4ea;"></div>
<svg style="left:592px;top:109px;overflow:hidden" width="16" height="16" viewBox="0 0 16 16"><g transform="translate(1 2) scale(0.95)"><path d="M0 3.500l4.500-3.500v2l-1.500 1v8h-3z" fill="#f07c12"/><path d="M3 3l4.500-3v9l-4.500 2z" fill="#ffe000"/><path d="M0 3.500l4.500-3.500h3l-4.500 3z" fill="#ffb830" opacity=".85"/><path d="M.8 5.500h1.200M.8 7.500h1.200M.8 9.500h1.200" stroke="#ffb060" stroke-width=".8"/><path d="M3 5.500l4.500-2M3 8l4.500-2" stroke="#f0c000" stroke-width=".5"/></g><g transform="translate(9 1.5) scale(1.0)"><path d="M0 9c0-3 1.500-4 3.500-4s3.500 1 3.500 4z" fill="#2a58d8" stroke="#102890" stroke-width=".5"/><circle cx="3.500" cy="3" r="2.200" fill="#f2b58a"/><path d="M1.300 2.600a2.200 2.200 0 0 1 4.400 0c-1-1-3.400-1-4.400 0z" fill="#6a2a0c"/><path d="M2.500 5.200l1 1.800 1-1.800z" fill="#fff"/></g><g transform="translate(5.3 4) scale(1.32)"><path d="M0 9c0-3 1.500-4 3.500-4s3.500 1 3.500 4z" fill="#e8202c" stroke="#a00010" stroke-width=".5"/><circle cx="3.500" cy="3" r="2.200" fill="#f2b58a"/><path d="M1.300 2.600a2.200 2.200 0 0 1 4.400 0c-1-1-3.400-1-4.400 0z" fill="#6a2a0c"/><path d="M2.500 5.200l1 1.800 1-1.800z" fill="#fff"/></g></svg>
<svg style="left:615px;top:109px;overflow:hidden" width="16" height="16" viewBox="0 0 16 16"><g transform="translate(0 0) scale(1)"><path d="M.5 .5h7l2.500 2.500v10h-9.5z" fill="#fff" stroke="#2a86d8" stroke-width="1"/><path d="M2 4.5h6" stroke="#38c8f0" stroke-width="1"/><path d="M2 6.5h6" stroke="#38c8f0" stroke-width="1"/><path d="M2 8.5h6" stroke="#38c8f0" stroke-width="1"/></g><g transform="translate(8 1) scale(1.2)"><path d="M0 9c0-3 1.500-4 3.500-4s3.500 1 3.500 4z" fill="#2a58d8" stroke="#102890" stroke-width=".5"/><circle cx="3.500" cy="3" r="2.200" fill="#f2b58a"/><path d="M1.300 2.600a2.200 2.200 0 0 1 4.400 0c-1-1-3.400-1-4.400 0z" fill="#6a2a0c"/><path d="M2.500 5.200l1 1.800 1-1.800z" fill="#fff"/></g><g transform="translate(2 10) scale(1.4)"><path d="M.2 .2h8.800l-2 3.300h-4.800z" fill="#f2f2f2" stroke="#2c2c2c" stroke-width="1"/><path d="M1.800 1.200h.9M3.400 1.200h.9M5 1.200h.9M6.600 1.200h.9M2.600 2.400h.9M4.200 2.400h.9M5.800 2.400h.9" stroke="#3a3a3a" stroke-width=".75"/><circle cx="3" cy="4.300" r=".65" fill="#2c2c2c"/><circle cx="6.200" cy="4.300" r=".65" fill="#2c2c2c"/><path d="M8.600 .4l1.600-1.900" stroke="#2c2c2c" stroke-width="1"/></g></svg>
<svg style="left:638px;top:109px;overflow:hidden" width="16" height="16" viewBox="0 0 16 16"><path d="M0 0h16v16h-16z" fill="#fff"/><text x=".3" y="5.300" font-family="Liberation Sans,sans-serif" font-weight="bold" font-size="6.800" fill="#1c1c90" textLength="15.400" lengthAdjust="spacingAndGlyphs">СЧЕТ</text><path d="M1.500 6.500h5.500M9 6.500h2M13 6.500h2M1.500 8.500h5.500M9 8.500h2M13 8.500h2M1.500 10.500h5.500M9 10.500h2M13 10.500h2M5 12.500h1M7 12.500h3" stroke="#c4c6d0" stroke-width="1"/><path d="M10 12h3.500l-1.750 2.500z" fill="#a8a0f0"/></svg>
<svg style="left:661px;top:109px;overflow:hidden" width="16" height="16" viewBox="0 0 16 16"><g transform="translate(0 0) scale(1)"><path d="M0 1h6.500v3h-6.500z" fill="#2020b0"/><path d="M0 1l1-1h6.500l-1 1z" fill="#5a5ae0"/><path d="M6.500 1l1-1v3l-1 1z" fill="#080850"/><path d="M1 2.500h1M2.800 2.500h1M4.600 2.500h1" stroke="#ffe060" stroke-width="1"/></g><g transform="translate(3 4) scale(1.1)"><path d="M0 1.500l1.500-1.500 3 3 1.500-1.500v5.500h-5.500l1.500-1.500z" fill="#8ada10" stroke="#1a4a00" stroke-width=".9"/></g><g transform="translate(10 9.5) scale(1)"><path d="M0 1.500h4.500v4.500h-4.500z" fill="#e81414"/><path d="M0 1.500l1.500-1.500h4.500l-1.500 1.500z" fill="#ff6a6a"/><path d="M4.500 1.500l1.500-1.500v4.500l-1.500 1.500z" fill="#a00000"/></g></svg>
<svg style="left:684px;top:109px;overflow:hidden" width="16" height="16" viewBox="0 0 16 16"><g transform="translate(0 0) scale(1)"><path d="M.5 .5h7l2.500 2.500v10h-9.5z" fill="#fff" stroke="#2a86d8" stroke-width="1"/><path d="M2 4.5h6" stroke="#38c8f0" stroke-width="1"/><path d="M2 6.5h6" stroke="#38c8f0" stroke-width="1"/><path d="M2 8.5h6" stroke="#38c8f0" stroke-width="1"/></g><g transform="translate(9 2.5) scale(1.0)"><path d="M0 9c0-3 1.500-4 3.500-4s3.500 1 3.500 4z" fill="#e8202c" stroke="#a00010" stroke-width=".5"/><circle cx="3.500" cy="3" r="2.200" fill="#f2b58a"/><path d="M1.300 2.600a2.200 2.200 0 0 1 4.400 0c-1-1-3.400-1-4.400 0z" fill="#6a2a0c"/><path d="M2.500 5.200l1 1.800 1-1.800z" fill="#fff"/></g><g transform="translate(4 5) scale(1.3)"><path d="M0 9c0-3 1.500-4 3.500-4s3.500 1 3.500 4z" fill="#2a58d8" stroke="#102890" stroke-width=".5"/><circle cx="3.500" cy="3" r="2.200" fill="#f2b58a"/><path d="M1.300 2.600a2.200 2.200 0 0 1 4.400 0c-1-1-3.400-1-4.400 0z" fill="#6a2a0c"/><path d="M2.500 5.200l1 1.800 1-1.800z" fill="#fff"/></g></svg>
<svg style="left:707px;top:109px;overflow:hidden" width="16" height="16" viewBox="0 0 16 16"><g transform="translate(0 0) scale(1)"><path d="M.5 .5h8l2.500 2.500v9h-10.5z" fill="#fff" stroke="#2a86d8" stroke-width="1"/><path d="M2 4.5h7" stroke="#38c8f0" stroke-width="1"/><path d="M2 6.5h7" stroke="#38c8f0" stroke-width="1"/><path d="M2 8.5h7" stroke="#38c8f0" stroke-width="1"/></g><path d="M6 4c3-2 6-1 6 3" fill="none" stroke="#1a3a7a" stroke-width="1"/><path d="M10 6l2 2.500 2-2.500z" fill="#1a3a7a"/><g transform="translate(8 9) scale(0.95)"><ellipse cx="3" cy="5.9" rx="3" ry="1.400" fill="#f6b400" stroke="#5a3800" stroke-width=".6"/><path d="M1.200 5.7h3.600" stroke="#ffe880" stroke-width=".6"/><ellipse cx="3" cy="3.7" rx="3" ry="1.400" fill="#f6b400" stroke="#5a3800" stroke-width=".6"/><path d="M1.200 3.5h3.600" stroke="#ffe880" stroke-width=".6"/><ellipse cx="3" cy="1.5" rx="3" ry="1.400" fill="#f6b400" stroke="#5a3800" stroke-width=".6"/><path d="M1.200 1.3h3.600" stroke="#ffe880" stroke-width=".6"/></g></svg>
<svg style="left:730px;top:109px;overflow:hidden" width="16" height="16" viewBox="0 0 16 16"><g transform="translate(0 1) scale(1)"><path d="M0 3.500l4.500-3.500v2l-1.500 1v8h-3z" fill="#f07c12"/><path d="M3 3l4.500-3v9l-4.500 2z" fill="#ffe000"/><path d="M0 3.500l4.500-3.500h3l-4.500 3z" fill="#ffb830" opacity=".85"/><path d="M.8 5.500h1.200M.8 7.500h1.200M.8 9.500h1.200" stroke="#ffb060" stroke-width=".8"/><path d="M3 5.500l4.500-2M3 8l4.500-2" stroke="#f0c000" stroke-width=".5"/></g><g transform="translate(8 7) scale(1.05)"><ellipse cx="3" cy="5.9" rx="3" ry="1.400" fill="#f6b400" stroke="#5a3800" stroke-width=".6"/><path d="M1.200 5.7h3.600" stroke="#ffe880" stroke-width=".6"/><ellipse cx="3" cy="3.7" rx="3" ry="1.400" fill="#f6b400" stroke="#5a3800" stroke-width=".6"/><path d="M1.200 3.5h3.600" stroke="#ffe880" stroke-width=".6"/><ellipse cx="3" cy="1.5" rx="3" ry="1.400" fill="#f6b400" stroke="#5a3800" stroke-width=".6"/><path d="M1.200 1.3h3.600" stroke="#ffe880" stroke-width=".6"/></g></svg>
<div class="t" style="left:754px;top:109px;height:16px;line-height:16px;font-size:11px;color:#3a3020;letter-spacing:0.048px;">Упаковочный лист</div>
<div class="t" style="left:857px;top:109px;height:16px;line-height:16px;font-size:11px;color:#3a3020;letter-spacing:-0.106px;">Сравнение продаж двух периодов</div>
<svg style="left:1036px;top:122px" width="8" height="4" viewBox="0 0 8 4"><path d="M0 0h8l-4 4z" fill="#4a3410"/></svg>
<div style="left:1053px;top:110px;width:3px;height:1px;background:#b1ab88;"></div>
<div style="left:1053px;top:112px;width:3px;height:1px;background:#b1ab88;"></div>
<div style="left:1053px;top:114px;width:3px;height:1px;background:#b1ab88;"></div>
<div style="left:1053px;top:116px;width:3px;height:1px;background:#b1ab88;"></div>
<div style="left:1053px;top:118px;width:3px;height:1px;background:#b1ab88;"></div>
<div style="left:1053px;top:120px;width:3px;height:1px;background:#b1ab88;"></div>
<div style="left:1053px;top:122px;width:3px;height:1px;background:#b1ab88;"></div>
<svg style="left:1062px;top:109px;overflow:hidden" width="16" height="16" viewBox="0 0 16 16"><path d="M1 3l3-3h11v10l-3 4h-11z" fill="#7a2c2c"/><path d="M1 3h11v11h-11z" fill="#f06414"/><path d="M1 3l3-3h11l-3 3z" fill="#a03c34"/><path d="M2 7.500h9v2.600h-9z" fill="#f4f4f4"/><path d="M3 6.200l1.500-1.200h7l-.5 1.200z" fill="#d8d8d8"/><path d="M4.500 4.800h4M4.500 12.200h4" stroke="#ffe060" stroke-width="1.200"/><path d="M1 7h11M1 10.500h11" stroke="#8a2a08" stroke-width=".6"/></svg>
<svg style="left:1085px;top:109px;overflow:hidden" width="16" height="16" viewBox="0 0 16 16"><path d="M1 0h10v7h-10z" fill="#fff" stroke="#2a6af0" stroke-width="1.200"/><path d="M3 2h6v3h-6z" fill="#2a6af0" opacity=".75"/><path d="M0 9l3-3h11l2 3v4l-2 2h-12l-2-2z" fill="#9a9a9a"/><path d="M0 9h14v4h-14z" fill="#c8c8c8"/><path d="M14 9l2-1.500v4l-2 2z" fill="#4a4a4a"/><path d="M1 13h13v1.500h-13z" fill="#3a3a3a"/><path d="M2 11h2" stroke="#20c020" stroke-width="1"/></svg>
<svg style="left:1108px;top:109px;overflow:hidden" width="16" height="16" viewBox="0 0 16 16"><path d="M1 0h10v7h-10z" fill="#fff" stroke="#1a9a9a" stroke-width="1.200"/><path d="M3 2h6v3h-6z" fill="#1a9a9a" opacity=".75"/><path d="M0 9l3-3h11l2 3v4l-2 2h-12l-2-2z" fill="#9a9a9a"/><path d="M0 9h14v4h-14z" fill="#c8c8c8"/><path d="M14 9l2-1.500v4l-2 2z" fill="#4a4a4a"/><path d="M1 13h13v1.500h-13z" fill="#3a3a3a"/><path d="M2 11h2" stroke="#20c020" stroke-width="1"/></svg>
<svg style="left:1131px;top:109px;overflow:hidden" width="16" height="16" viewBox="0 0 16 16"><path d="M1 0h10v7h-10z" fill="#fff" stroke="#f08a28" stroke-width="1.200"/><path d="M3 2h6v3h-6z" fill="#f08a28" opacity=".75"/><path d="M0 9l3-3h11l2 3v4l-2 2h-12l-2-2z" fill="#9a9a9a"/><path d="M0 9h14v4h-14z" fill="#c8c8c8"/><path d="M14 9l2-1.500v4l-2 2z" fill="#4a4a4a"/><path d="M1 13h13v1.500h-13z" fill="#3a3a3a"/><path d="M2 11h2" stroke="#20c020" stroke-width="1"/></svg>
<div style="left:1152px;top:107px;width:1px;height:20px;background:#cbc2a4;"></div>
<div style="left:1153px;top:107px;width:1px;height:20px;background:#f8f4ea;"></div>
<svg style="left:1158px;top:109px;overflow:hidden" width="16" height="16" viewBox="0 0 16 16"><g transform="translate(1 0.5) scale(1)"><g transform="translate(0 0)"><circle cx="3" cy="1.800" r="1.700" fill="#e8a070"/><path d="M.3 4.500c0-1 .8-1.200 2.700-1.200s2.700.2 2.700 1.200v4.500h-1v6h-1.500v-5h-.5v5h-1.500v-6h-1z" fill="#1c44c8"/><path d="M.3 4.500v4.500h1v6h.8v-11.600c-1.200 0-1.800.4-1.800 1.100z" fill="#0c2890"/></g><g transform="translate(7 0)"><circle cx="3" cy="1.800" r="1.700" fill="#e8a070"/><path d="M.3 4.500c0-1 .8-1.200 2.700-1.200s2.700.2 2.700 1.200v4.500h-1v6h-1.500v-5h-.5v5h-1.500v-6h-1z" fill="#1c44c8"/><path d="M.3 4.500v4.500h1v6h.8v-11.600c-1.200 0-1.800.4-1.800 1.100z" fill="#0c2890"/></g><path d="M6 8l1.500-2 1.500 2z" fill="#fff"/></g></svg>
<svg style="left:1182px;top:109px;overflow:hidden" width="16" height="16" viewBox="0 0 16 16"><path d="M0 0h16v16h-16z" fill="#5a8a5a"/><path d="M1 1h14v5h-14z" fill="#9aa8c0"/><path d="M1 7h14v8h-14z" fill="#c8ecc8"/><ellipse cx="8" cy="11" rx="4" ry="3.300" fill="#e8f8e8" stroke="#3a8a3a"/><text x="6.300" y="13.500" font-family="Liberation Sans,sans-serif" font-size="6.500" font-weight="bold" fill="#2a7a2a">$</text><path d="M4 3.500h8" stroke="#3a4a7a" stroke-width="1.500"/></svg>
<svg style="left:1205px;top:109px;overflow:hidden" width="16" height="16" viewBox="0 0 16 16"><path d="M0 13l2-4h12l2 4v2.500h-16z" fill="#d8d8a0"/><path d="M0 13h16v2.500h-16z" fill="#b0b070"/><path d="M2 9l3-6h7l2 6z" fill="#2a3a9a"/><path d="M5 5h1M7 5h1M9 5h1M4.500 7h1M6.500 7h1M8.500 7h1M10.500 7h1" stroke="#c8d8ff" stroke-width="1"/><path d="M4 0h5v3h-5z" fill="#f4f4f4" stroke="#888" stroke-width=".6"/><path d="M11 8l4-6" stroke="#222" stroke-width="1.300"/><path d="M9 1.500h2v2h-2z" fill="#e02020"/><path d="M11 10h4v3h-4z" fill="#eeeeee"/></svg>
<svg style="left:1227px;top:122px" width="8" height="4" viewBox="0 0 8 4"><path d="M0 0h8l-4 4z" fill="#4a3410"/></svg>
<div style="left:1243px;top:110px;width:3px;height:1px;background:#b1ab88;"></div>
<div style="left:1243px;top:112px;width:3px;height:1px;background:#b1ab88;"></div>
<div style="left:1243px;top:114px;width:3px;height:1px;background:#b1ab88;"></div>
<div style="left:1243px;top:116px;width:3px;height:1px;background:#b1ab88;"></div>
<div style="left:1243px;top:118px;width:3px;height:1px;background:#b1ab88;"></div>
<div style="left:1243px;top:120px;width:3px;height:1px;background:#b1ab88;"></div>
<div style="left:1243px;top:122px;width:3px;height:1px;background:#b1ab88;"></div>
<svg style="left:1252px;top:109px;overflow:hidden" width="16" height="16" viewBox="0 0 16 16"><g transform="translate(1 2) scale(0.95)"><path d="M0 3.500l4.500-3.500v2l-1.500 1v8h-3z" fill="#f07c12"/><path d="M3 3l4.500-3v9l-4.500 2z" fill="#ffe000"/><path d="M0 3.500l4.500-3.500h3l-4.500 3z" fill="#ffb830" opacity=".85"/><path d="M.8 5.500h1.200M.8 7.500h1.200M.8 9.500h1.200" stroke="#ffb060" stroke-width=".8"/><path d="M3 5.500l4.500-2M3 8l4.500-2" stroke="#f0c000" stroke-width=".5"/></g><g transform="translate(9 1.5) scale(1.0)"><path d="M0 9c0-3 1.500-4 3.500-4s3.500 1 3.500 4z" fill="#2a58d8" stroke="#102890" stroke-width=".5"/><circle cx="3.500" cy="3" r="2.200" fill="#f2b58a"/><path d="M1.300 2.600a2.200 2.200 0 0 1 4.400 0c-1-1-3.400-1-4.400 0z" fill="#6a2a0c"/><path d="M2.500 5.200l1 1.800 1-1.800z" fill="#fff"/></g><g transform="translate(5.3 4) scale(1.32)"><path d="M0 9c0-3 1.500-4 3.500-4s3.500 1 3.500 4z" fill="#e8202c" stroke="#a00010" stroke-width=".5"/><circle cx="3.500" cy="3" r="2.200" fill="#f2b58a"/><path d="M1.300 2.600a2.200 2.200 0 0 1 4.400 0c-1-1-3.400-1-4.400 0z" fill="#6a2a0c"/><path d="M2.500 5.200l1 1.800 1-1.800z" fill="#fff"/></g></svg>
<svg style="left:1275px;top:109px;overflow:hidden" width="16" height="16" viewBox="0 0 16 16"><g transform="translate(1 0) scale(0.95)"><path d="M0 3.500l4.500-3.500v2l-1.500 1v8h-3z" fill="#f07c12"/><path d="M3 3l4.500-3v9l-4.500 2z" fill="#ffe000"/><path d="M0 3.500l4.500-3.500h3l-4.500 3z" fill="#ffb830" opacity=".85"/><path d="M.8 5.500h1.200M.8 7.500h1.200M.8 9.500h1.200" stroke="#ffb060" stroke-width=".8"/><path d="M3 5.500l4.500-2M3 8l4.500-2" stroke="#f0c000" stroke-width=".5"/></g><g transform="translate(8 1.5) scale(1.15)"><path d="M0 9c0-3 1.500-4 3.500-4s3.500 1 3.500 4z" fill="#2a58d8" stroke="#102890" stroke-width=".5"/><circle cx="3.500" cy="3" r="2.200" fill="#f2b58a"/><path d="M1.300 2.600a2.200 2.200 0 0 1 4.400 0c-1-1-3.400-1-4.400 0z" fill="#6a2a0c"/><path d="M2.500 5.200l1 1.800 1-1.800z" fill="#fff"/></g><g transform="translate(0 10) scale(1.4)"><path d="M.2 .2h8.800l-2 3.300h-4.800z" fill="#f2f2f2" stroke="#2c2c2c" stroke-width="1"/><path d="M1.800 1.200h.9M3.400 1.200h.9M5 1.200h.9M6.600 1.200h.9M2.600 2.400h.9M4.200 2.400h.9M5.800 2.400h.9" stroke="#3a3a3a" stroke-width=".75"/><circle cx="3" cy="4.300" r=".65" fill="#2c2c2c"/><circle cx="6.200" cy="4.300" r=".65" fill="#2c2c2c"/><path d="M8.600 .4l1.600-1.900" stroke="#2c2c2c" stroke-width="1"/></g></svg>
<svg style="left:1298px;top:109px;overflow:hidden" width="16" height="16" viewBox="0 0 16 16"><g transform="translate(1 0) scale(0.95)"><path d="M0 3.500l4.500-3.500v2l-1.500 1v8h-3z" fill="#f07c12"/><path d="M3 3l4.500-3v9l-4.500 2z" fill="#ffe000"/><path d="M0 3.500l4.500-3.500h3l-4.500 3z" fill="#ffb830" opacity=".85"/><path d="M.8 5.500h1.200M.8 7.500h1.200M.8 9.500h1.200" stroke="#ffb060" stroke-width=".8"/><path d="M3 5.500l4.500-2M3 8l4.500-2" stroke="#f0c000" stroke-width=".5"/></g><g transform="translate(8 0.5) scale(1.15)"><path d="M0 9c0-3 1.500-4 3.500-4s3.500 1 3.500 4z" fill="#e8202c" stroke="#a00010" stroke-width=".5"/><circle cx="3.500" cy="3" r="2.200" fill="#f2b58a"/><path d="M1.300 2.600a2.200 2.200 0 0 1 4.400 0c-1-1-3.400-1-4.400 0z" fill="#6a2a0c"/><path d="M2.500 5.200l1 1.800 1-1.800z" fill="#fff"/></g><g transform="translate(1 10) scale(1.4)"><path d="M.2 .2h8.800l-2 3.300h-4.800z" fill="#f2f2f2" stroke="#2c2c2c" stroke-width="1"/><path d="M1.800 1.200h.9M3.400 1.200h.9M5 1.200h.9M6.600 1.200h.9M2.600 2.400h.9M4.200 2.400h.9M5.800 2.400h.9" stroke="#3a3a3a" stroke-width=".75"/><circle cx="3" cy="4.300" r=".65" fill="#2c2c2c"/><circle cx="6.200" cy="4.300" r=".65" fill="#2c2c2c"/><path d="M8.600 .4l1.600-1.900" stroke="#2c2c2c" stroke-width="1"/></g></svg>
<svg style="left:1321px;top:109px;overflow:hidden" width="16" height="16" viewBox="0 0 16 16"><g transform="translate(0 1) scale(1)"><path d="M0 3.500l4.500-3.500v2l-1.500 1v8h-3z" fill="#f07c12"/><path d="M3 3l4.500-3v9l-4.500 2z" fill="#ffe000"/><path d="M0 3.500l4.500-3.500h3l-4.500 3z" fill="#ffb830" opacity=".85"/><path d="M.8 5.500h1.200M.8 7.500h1.200M.8 9.500h1.200" stroke="#ffb060" stroke-width=".8"/><path d="M3 5.500l4.500-2M3 8l4.500-2" stroke="#f0c000" stroke-width=".5"/></g><g transform="translate(8 7) scale(1.05)"><ellipse cx="3" cy="5.9" rx="3" ry="1.400" fill="#f6b400" stroke="#5a3800" stroke-width=".6"/><path d="M1.200 5.7h3.600" stroke="#ffe880" stroke-width=".6"/><ellipse cx="3" cy="3.7" rx="3" ry="1.400" fill="#f6b400" stroke="#5a3800" stroke-width=".6"/><path d="M1.200 3.5h3.600" stroke="#ffe880" stroke-width=".6"/><ellipse cx="3" cy="1.5" rx="3" ry="1.400" fill="#f6b400" stroke="#5a3800" stroke-width=".6"/><path d="M1.200 1.3h3.600" stroke="#ffe880" stroke-width=".6"/></g></svg>
<svg style="left:1344px;top:109px;overflow:hidden" width="16" height="16" viewBox="0 0 16 16"><g transform="translate(1 0) scale(1)"><path d="M0 3.500l4.500-3.500v2l-1.500 1v8h-3z" fill="#f07c12"/><path d="M3 3l4.500-3v9l-4.500 2z" fill="#ffe000"/><path d="M0 3.500l4.500-3.500h3l-4.500 3z" fill="#ffb830" opacity=".85"/><path d="M.8 5.500h1.200M.8 7.500h1.200M.8 9.500h1.200" stroke="#ffb060" stroke-width=".8"/><path d="M3 5.500l4.500-2M3 8l4.500-2" stroke="#f0c000" stroke-width=".5"/></g><path d="M4 15v-5h1.500v-7h1.500v5h1.500v-6h1.500v8h1.500v-8h1.500v13z" fill="#8a8a8a"/><path d="M3 12h12v3.500h-12z" fill="#6e6e6e"/><path d="M5 13v2M7 13v2M9 13v2M11 13v2M13 13v2" stroke="#d0d0d0" stroke-width=".8"/></svg>
<svg style="left:1367px;top:109px;overflow:hidden" width="16" height="16" viewBox="0 0 16 16"><g transform="translate(1 0) scale(1)"><path d="M0 3.500l4.500-3.500v2l-1.500 1v8h-3z" fill="#f07c12"/><path d="M3 3l4.500-3v9l-4.500 2z" fill="#ffe000"/><path d="M0 3.500l4.500-3.500h3l-4.500 3z" fill="#ffb830" opacity=".85"/><path d="M.8 5.500h1.200M.8 7.500h1.200M.8 9.500h1.200" stroke="#ffb060" stroke-width=".8"/><path d="M3 5.500l4.500-2M3 8l4.500-2" stroke="#f0c000" stroke-width=".5"/></g><g transform="translate(5 10.5) scale(1.15)"><path d="M0 1h6.500v3h-6.500z" fill="#7a7a7a"/><path d="M0 1l1-1h6.500l-1 1z" fill="#5a5ae0"/><path d="M6.500 1l1-1v3l-1 1z" fill="#3a3a3a"/><path d="M1 2.500h1M2.800 2.500h1M4.600 2.500h1" stroke="#e0e0e0" stroke-width="1"/></g></svg>
<svg style="left:1390px;top:109px;overflow:hidden" width="16" height="16" viewBox="0 0 16 16"><g transform="translate(1 1) scale(1)"><path d="M0 3.500l4.500-3.500v2l-1.500 1v8h-3z" fill="#f07c12"/><path d="M3 3l4.500-3v9l-4.500 2z" fill="#ffe000"/><path d="M0 3.500l4.500-3.500h3l-4.500 3z" fill="#ffb830" opacity=".85"/><path d="M.8 5.500h1.200M.8 7.500h1.200M.8 9.500h1.200" stroke="#ffb060" stroke-width=".8"/><path d="M3 5.500l4.500-2M3 8l4.500-2" stroke="#f0c000" stroke-width=".5"/></g><g transform="translate(4 6) scale(0.95)"><ellipse cx="3" cy="8.1" rx="3" ry="1.400" fill="#f6b400" stroke="#5a3800" stroke-width=".6"/><path d="M1.200 7.9h3.600" stroke="#ffe880" stroke-width=".6"/><ellipse cx="3" cy="5.9" rx="3" ry="1.400" fill="#f6b400" stroke="#5a3800" stroke-width=".6"/><path d="M1.200 5.7h3.600" stroke="#ffe880" stroke-width=".6"/><ellipse cx="3" cy="3.7" rx="3" ry="1.400" fill="#f6b400" stroke="#5a3800" stroke-width=".6"/><path d="M1.200 3.5h3.600" stroke="#ffe880" stroke-width=".6"/><ellipse cx="3" cy="1.5" rx="3" ry="1.400" fill="#f6b400" stroke="#5a3800" stroke-width=".6"/><path d="M1.200 1.3h3.600" stroke="#ffe880" stroke-width=".6"/></g><g transform="translate(10 12.5) scale(0.95)"><ellipse cx="3" cy="1.5" rx="3" ry="1.400" fill="#f6b400" stroke="#5a3800" stroke-width=".6"/><path d="M1.200 1.3h3.600" stroke="#ffe880" stroke-width=".6"/></g></svg>
<div style="left:1411px;top:107px;width:1px;height:20px;background:#cbc2a4;"></div>
<div style="left:1412px;top:107px;width:1px;height:20px;background:#f8f4ea;"></div>
<svg style="left:1418px;top:109px;overflow:hidden" width="16" height="16" viewBox="0 0 16 16"><g transform="translate(0 0) scale(1)"><path d="M.5 .5h7l2.500 2.500v10h-9.5z" fill="#fff" stroke="#2a86d8" stroke-width="1"/><path d="M2 4.5h6" stroke="#38c8f0" stroke-width="1"/><path d="M2 6.5h6" stroke="#38c8f0" stroke-width="1"/><path d="M2 8.5h6" stroke="#38c8f0" stroke-width="1"/></g><g transform="translate(8 1) scale(1.2)"><path d="M0 9c0-3 1.500-4 3.500-4s3.500 1 3.500 4z" fill="#2a58d8" stroke="#102890" stroke-width=".5"/><circle cx="3.500" cy="3" r="2.200" fill="#f2b58a"/><path d="M1.300 2.600a2.200 2.200 0 0 1 4.400 0c-1-1-3.400-1-4.400 0z" fill="#6a2a0c"/><path d="M2.500 5.200l1 1.800 1-1.800z" fill="#fff"/></g><g transform="translate(2 10) scale(1.4)"><path d="M.2 .2h8.800l-2 3.300h-4.800z" fill="#f2f2f2" stroke="#2c2c2c" stroke-width="1"/><path d="M1.800 1.200h.9M3.400 1.200h.9M5 1.200h.9M6.600 1.200h.9M2.600 2.400h.9M4.200 2.400h.9M5.800 2.400h.9" stroke="#3a3a3a" stroke-width=".75"/><circle cx="3" cy="4.300" r=".65" fill="#2c2c2c"/><circle cx="6.200" cy="4.300" r=".65" fill="#2c2c2c"/><path d="M8.600 .4l1.600-1.900" stroke="#2c2c2c" stroke-width="1"/></g></svg>
<svg style="left:1441px;top:109px;overflow:hidden" width="16" height="16" viewBox="0 0 16 16"><g transform="translate(0 0) scale(1)"><path d="M0 1h6.500v3h-6.500z" fill="#2020b0"/><path d="M0 1l1-1h6.500l-1 1z" fill="#5a5ae0"/><path d="M6.500 1l1-1v3l-1 1z" fill="#080850"/><path d="M1 2.500h1M2.800 2.500h1M4.600 2.500h1" stroke="#ffe060" stroke-width="1"/></g><g transform="translate(3 4) scale(1.1)"><path d="M0 1.500l1.500-1.500 3 3 1.500-1.500v5.500h-5.500l1.500-1.500z" fill="#8ada10" stroke="#1a4a00" stroke-width=".9"/></g><g transform="translate(10 9.5) scale(1)"><path d="M0 1.500h4.500v4.500h-4.500z" fill="#e81414"/><path d="M0 1.500l1.500-1.500h4.500l-1.500 1.500z" fill="#ff6a6a"/><path d="M4.500 1.500l1.500-1.500v4.500l-1.500 1.500z" fill="#a00000"/></g></svg>
<svg style="left:1464px;top:109px;overflow:hidden" width="16" height="16" viewBox="0 0 16 16"><g transform="translate(0 0) scale(1)"><path d="M.5 .5h7l2.500 2.500v10h-9.5z" fill="#fff" stroke="#2a86d8" stroke-width="1"/><path d="M2 4.5h6" stroke="#38c8f0" stroke-width="1"/><path d="M2 6.5h6" stroke="#38c8f0" stroke-width="1"/><path d="M2 8.5h6" stroke="#38c8f0" stroke-width="1"/></g><g transform="translate(8 1) scale(1.2)"><path d="M0 9c0-3 1.500-4 3.500-4s3.500 1 3.500 4z" fill="#e8202c" stroke="#a00010" stroke-width=".5"/><circle cx="3.500" cy="3" r="2.200" fill="#f2b58a"/><path d="M1.300 2.600a2.200 2.200 0 0 1 4.400 0c-1-1-3.400-1-4.400 0z" fill="#6a2a0c"/><path d="M2.500 5.200l1 1.800 1-1.800z" fill="#fff"/></g><g transform="translate(2 10) scale(1.4)"><path d="M.2 .2h8.800l-2 3.300h-4.800z" fill="#f2f2f2" stroke="#2c2c2c" stroke-width="1"/><path d="M1.800 1.200h.9M3.400 1.200h.9M5 1.200h.9M6.600 1.200h.9M2.600 2.400h.9M4.200 2.400h.9M5.800 2.400h.9" stroke="#3a3a3a" stroke-width=".75"/><circle cx="3" cy="4.300" r=".65" fill="#2c2c2c"/><circle cx="6.200" cy="4.300" r=".65" fill="#2c2c2c"/><path d="M8.600 .4l1.600-1.900" stroke="#2c2c2c" stroke-width="1"/></g></svg>
<svg style="left:1487px;top:109px;overflow:hidden" width="16" height="16" viewBox="0 0 16 16"><g transform="translate(0 0) scale(1)"><path d="M0 1.500h4.500v4.500h-4.500z" fill="#e81414"/><path d="M0 1.500l1.500-1.500h4.500l-1.500 1.500z" fill="#ff6a6a"/><path d="M4.500 1.500l1.500-1.500v4.500l-1.500 1.500z" fill="#a00000"/></g><g transform="translate(4 4) scale(1.1)"><path d="M0 1.500l1.500-1.500 3 3 1.500-1.500v5.500h-5.500l1.500-1.500z" fill="#8ada10" stroke="#1a4a00" stroke-width=".9"/></g><g transform="translate(7 12) scale(1)"><path d="M0 1h6.500v3h-6.500z" fill="#2020b0"/><path d="M0 1l1-1h6.500l-1 1z" fill="#5a5ae0"/><path d="M6.500 1l1-1v3l-1 1z" fill="#080850"/><path d="M1 2.500h1M2.800 2.500h1M4.600 2.500h1" stroke="#ffe060" stroke-width="1"/></g></svg>
<svg style="left:1510px;top:109px;overflow:hidden" width="16" height="16" viewBox="0 0 16 16"><g transform="translate(0 0) scale(1)"><path d="M0 1.500h4.500v4.500h-4.500z" fill="#e81414"/><path d="M0 1.500l1.500-1.500h4.500l-1.500 1.500z" fill="#ff6a6a"/><path d="M4.500 1.500l1.500-1.500v4.500l-1.500 1.500z" fill="#a00000"/></g><g transform="translate(4 4) scale(1.1)"><path d="M0 1.500l1.500-1.500 3 3 1.500-1.500v5.500h-5.500l1.500-1.500z" fill="#8ada10" stroke="#1a4a00" stroke-width=".9"/></g><g transform="translate(7 12) scale(1)"><path d="M0 1h6.500v3h-6.500z" fill="#2a70f0"/><path d="M0 1l1-1h6.500l-1 1z" fill="#5a5ae0"/><path d="M6.500 1l1-1v3l-1 1z" fill="#1040a0"/><path d="M1 2.500h1M2.800 2.500h1M4.600 2.500h1" stroke="#ffffff" stroke-width="1"/></g></svg>
<svg style="left:1533px;top:109px;overflow:hidden" width="16" height="16" viewBox="0 0 16 16"><g transform="translate(0 5) scale(0.95)"><ellipse cx="3" cy="10.3" rx="3" ry="1.400" fill="#f6b400" stroke="#5a3800" stroke-width=".6"/><path d="M1.200 10.1h3.600" stroke="#ffe880" stroke-width=".6"/><ellipse cx="3" cy="8.1" rx="3" ry="1.400" fill="#f6b400" stroke="#5a3800" stroke-width=".6"/><path d="M1.200 7.9h3.600" stroke="#ffe880" stroke-width=".6"/><ellipse cx="3" cy="5.9" rx="3" ry="1.400" fill="#f6b400" stroke="#5a3800" stroke-width=".6"/><path d="M1.200 5.7h3.600" stroke="#ffe880" stroke-width=".6"/><ellipse cx="3" cy="3.7" rx="3" ry="1.400" fill="#f6b400" stroke="#5a3800" stroke-width=".6"/><path d="M1.200 3.5h3.600" stroke="#ffe880" stroke-width=".6"/><ellipse cx="3" cy="1.5" rx="3" ry="1.400" fill="#f6b400" stroke="#5a3800" stroke-width=".6"/><path d="M1.200 1.3h3.600" stroke="#ffe880" stroke-width=".6"/></g><g transform="translate(8 10.5) scale(0.95)"><ellipse cx="3" cy="3.7" rx="3" ry="1.400" fill="#f6b400" stroke="#5a3800" stroke-width=".6"/><path d="M1.200 3.5h3.600" stroke="#ffe880" stroke-width=".6"/><ellipse cx="3" cy="1.5" rx="3" ry="1.400" fill="#f6b400" stroke="#5a3800" stroke-width=".6"/><path d="M1.200 1.3h3.600" stroke="#ffe880" stroke-width=".6"/></g><path d="M4 4c2-4 8-3 8 2" fill="none" stroke="#1a3a7a" stroke-width="1.100"/><path d="M10 4.500l2 3 2-3z" fill="#1a3a7a"/></svg>
<svg style="left:1556px;top:109px;overflow:hidden" width="16" height="16" viewBox="0 0 16 16"><g transform="translate(0 0) scale(1)"><path d="M.5 .5h7l3 3v9h-10z" fill="#fdfdff" stroke="#8aa0c0" stroke-width="1"/><path d="M7.5 .5v3h3" fill="#dfe8f4" stroke="#8aa0c0" stroke-width=".8"/></g><path d="M5 15.500l3-7h7.500v7z" fill="#28a028"/><path d="M8 9h7v6h-7z" fill="#d8f0c8"/><g transform="translate(8.5 9.5) scale(0.95)"><ellipse cx="3" cy="3.7" rx="3" ry="1.400" fill="#f6b400" stroke="#5a3800" stroke-width=".6"/><path d="M1.200 3.5h3.600" stroke="#ffe880" stroke-width=".6"/><ellipse cx="3" cy="1.5" rx="3" ry="1.400" fill="#f6b400" stroke="#5a3800" stroke-width=".6"/><path d="M1.200 1.3h3.600" stroke="#ffe880" stroke-width=".6"/></g></svg>
<svg style="left:1579px;top:109px;overflow:hidden" width="16" height="16" viewBox="0 0 16 16"><g transform="translate(0 0) scale(1)"><path d="M0 1h6.500v3h-6.500z" fill="#2020b0"/><path d="M0 1l1-1h6.500l-1 1z" fill="#5a5ae0"/><path d="M6.500 1l1-1v3l-1 1z" fill="#080850"/><path d="M1 2.500h1M2.800 2.500h1M4.600 2.500h1" stroke="#ffe060" stroke-width="1"/></g><g transform="translate(3 4) scale(1.1)"><path d="M0 1.500l1.500-1.500 3 3 1.500-1.500v5.500h-5.500l1.500-1.500z" fill="#8ada10" stroke="#1a4a00" stroke-width=".9"/></g><g transform="translate(7 11.5) scale(1)"><path d="M0 1h6.500v3h-6.500z" fill="#f08030"/><path d="M0 1l1-1h6.500l-1 1z" fill="#5a5ae0"/><path d="M6.500 1l1-1v3l-1 1z" fill="#a04000"/><path d="M1 2.500h1M2.800 2.500h1M4.600 2.500h1" stroke="#803000" stroke-width="1"/></g></svg>
<svg style="left:1602px;top:109px;overflow:hidden" width="16" height="16" viewBox="0 0 16 16"><g transform="translate(0 0) scale(1)"><path d="M.5 .5h8l2.500 2.500v9h-10.5z" fill="#fff" stroke="#2a86d8" stroke-width="1"/><path d="M2 4.5h7" stroke="#38c8f0" stroke-width="1"/><path d="M2 6.5h7" stroke="#38c8f0" stroke-width="1"/><path d="M2 8.5h7" stroke="#38c8f0" stroke-width="1"/></g><path d="M6 4c3-2 6-1 6 3" fill="none" stroke="#1a3a7a" stroke-width="1"/><path d="M10 6l2 2.500 2-2.500z" fill="#1a3a7a"/><g transform="translate(8 9) scale(0.95)"><ellipse cx="3" cy="5.9" rx="3" ry="1.400" fill="#f6b400" stroke="#5a3800" stroke-width=".6"/><path d="M1.200 5.7h3.600" stroke="#ffe880" stroke-width=".6"/><ellipse cx="3" cy="3.7" rx="3" ry="1.400" fill="#f6b400" stroke="#5a3800" stroke-width=".6"/><path d="M1.200 3.5h3.600" stroke="#ffe880" stroke-width=".6"/><ellipse cx="3" cy="1.5" rx="3" ry="1.400" fill="#f6b400" stroke="#5a3800" stroke-width=".6"/><path d="M1.200 1.3h3.600" stroke="#ffe880" stroke-width=".6"/></g></svg>
<svg style="left:1625px;top:109px;overflow:hidden" width="16" height="16" viewBox="0 0 16 16"><g transform="translate(4 0) scale(1)"><path d="M.5 .5h8l2.500 2.500v9h-10.5z" fill="#fff" stroke="#2a86d8" stroke-width="1"/><path d="M2 4.5h7" stroke="#38c8f0" stroke-width="1"/><path d="M2 6.5h7" stroke="#38c8f0" stroke-width="1"/><path d="M2 8.5h7" stroke="#38c8f0" stroke-width="1"/></g><g transform="translate(0 0) scale(0.95)"><ellipse cx="3" cy="3.7" rx="3" ry="1.400" fill="#f6b400" stroke="#5a3800" stroke-width=".6"/><path d="M1.200 3.5h3.600" stroke="#ffe880" stroke-width=".6"/><ellipse cx="3" cy="1.5" rx="3" ry="1.400" fill="#f6b400" stroke="#5a3800" stroke-width=".6"/><path d="M1.200 1.3h3.600" stroke="#ffe880" stroke-width=".6"/></g><path d="M2 7c0 4 4 5 7 4" fill="none" stroke="#1a3a7a" stroke-width="1"/><path d="M0 8l2-2.500 2 2.500z" fill="#1a3a7a"/></svg>
<svg style="left:1648px;top:109px;overflow:hidden" width="16" height="16" viewBox="0 0 16 16"><path d="M7 6h8.500v9.500h-11z" fill="#b0b0b0"/><g transform="translate(9 6.5) scale(0.9)"><ellipse cx="3" cy="8.1" rx="3" ry="1.400" fill="#f6b400" stroke="#5a3800" stroke-width=".6"/><path d="M1.200 7.9h3.600" stroke="#ffe880" stroke-width=".6"/><ellipse cx="3" cy="5.9" rx="3" ry="1.400" fill="#f6b400" stroke="#5a3800" stroke-width=".6"/><path d="M1.200 5.7h3.600" stroke="#ffe880" stroke-width=".6"/><ellipse cx="3" cy="3.7" rx="3" ry="1.400" fill="#f6b400" stroke="#5a3800" stroke-width=".6"/><path d="M1.200 3.5h3.600" stroke="#ffe880" stroke-width=".6"/><ellipse cx="3" cy="1.5" rx="3" ry="1.400" fill="#f6b400" stroke="#5a3800" stroke-width=".6"/><path d="M1.200 1.3h3.600" stroke="#ffe880" stroke-width=".6"/></g><path d="M4 0v8M0 4h8" stroke="#28b828" stroke-width="2.600"/></svg>
<svg style="left:1671px;top:109px;overflow:hidden" width="16" height="16" viewBox="0 0 16 16"><path d="M7 6h8.500v9.500h-11z" fill="#b0b0b0"/><g transform="translate(9 6.5) scale(0.9)"><ellipse cx="3" cy="8.1" rx="3" ry="1.400" fill="#f6b400" stroke="#5a3800" stroke-width=".6"/><path d="M1.200 7.9h3.600" stroke="#ffe880" stroke-width=".6"/><ellipse cx="3" cy="5.9" rx="3" ry="1.400" fill="#f6b400" stroke="#5a3800" stroke-width=".6"/><path d="M1.200 5.7h3.600" stroke="#ffe880" stroke-width=".6"/><ellipse cx="3" cy="3.7" rx="3" ry="1.400" fill="#f6b400" stroke="#5a3800" stroke-width=".6"/><path d="M1.200 3.5h3.600" stroke="#ffe880" stroke-width=".6"/><ellipse cx="3" cy="1.5" rx="3" ry="1.400" fill="#f6b400" stroke="#5a3800" stroke-width=".6"/><path d="M1.200 1.3h3.600" stroke="#ffe880" stroke-width=".6"/></g><path d="M0 3.500h9" stroke="#38c038" stroke-width="2.600"/></svg>
<svg style="left:1706px;top:107px" width="10" height="8" viewBox="0 0 10 8"><path d="M1 1l3 3-3 3M6 1l3 3-3 3" fill="none" stroke="#3a2a10" stroke-width="1.500"/></svg>
<svg style="left:1707px;top:122px" width="8" height="4" viewBox="0 0 8 4"><path d="M0 0h8l-4 4z" fill="#3a2a10"/></svg>
<div style="left:1723px;top:110px;width:3px;height:1px;background:#b1ab88;"></div>
<div style="left:1723px;top:112px;width:3px;height:1px;background:#b1ab88;"></div>
<div style="left:1723px;top:114px;width:3px;height:1px;background:#b1ab88;"></div>
<div style="left:1723px;top:116px;width:3px;height:1px;background:#b1ab88;"></div>
<div style="left:1723px;top:118px;width:3px;height:1px;background:#b1ab88;"></div>
<div style="left:1723px;top:120px;width:3px;height:1px;background:#b1ab88;"></div>
<div style="left:1723px;top:122px;width:3px;height:1px;background:#b1ab88;"></div>
<svg style="left:1732px;top:109px;overflow:hidden" width="16" height="16" viewBox="0 0 16 16"><g transform="translate(0 1) scale(1)"><path d="M.5 .5h8l2.500 2.500v7.500h-10.500z" fill="#fff" stroke="#b8b8b8" stroke-width=".8"/><path d="M0 11.200h11" stroke="#8a8a8a" stroke-width="1"/><path d="M6.500 3.200h-4.300l2.500 2.800-2.500 2.800h4.300" fill="none" stroke="#222" stroke-width=".9"/></g><g transform="translate(6 0) scale(1.15)"><path d="M0 9c0-3 1.500-4 3.500-4s3.500 1 3.500 4z" fill="#2a58d8" stroke="#102890" stroke-width=".5"/><circle cx="3.500" cy="3" r="2.200" fill="#f2b58a"/><path d="M1.300 2.600a2.200 2.200 0 0 1 4.400 0c-1-1-3.400-1-4.400 0z" fill="#6a2a0c"/><path d="M2.500 5.200l1 1.800 1-1.800z" fill="#fff"/></g><g transform="translate(8 9) scale(1)"><path d="M0 1.500h4.500v4.500h-4.500z" fill="#e81414"/><path d="M0 1.500l1.500-1.500h4.500l-1.500 1.500z" fill="#ff6a6a"/><path d="M4.500 1.500l1.500-1.500v4.500l-1.500 1.500z" fill="#a00000"/></g></svg>
<svg style="left:1755px;top:109px;overflow:hidden" width="16" height="16" viewBox="0 0 16 16"><g transform="translate(0 1) scale(1)"><path d="M.5 .5h8l2.500 2.500v7.500h-10.500z" fill="#fff" stroke="#b8b8b8" stroke-width=".8"/><path d="M0 11.200h11" stroke="#8a8a8a" stroke-width="1"/><path d="M6.500 3.200h-4.300l2.500 2.800-2.500 2.800h4.300" fill="none" stroke="#222" stroke-width=".9"/></g><g transform="translate(6 0) scale(1.15)"><path d="M0 9c0-3 1.500-4 3.500-4s3.500 1 3.500 4z" fill="#e8202c" stroke="#a00010" stroke-width=".5"/><circle cx="3.500" cy="3" r="2.200" fill="#f2b58a"/><path d="M1.300 2.600a2.200 2.200 0 0 1 4.400 0c-1-1-3.400-1-4.400 0z" fill="#6a2a0c"/><path d="M2.500 5.200l1 1.800 1-1.800z" fill="#fff"/></g><g transform="translate(8 9) scale(1)"><path d="M0 1.500h4.500v4.500h-4.500z" fill="#1838d8"/><path d="M0 1.500l1.500-1.500h4.500l-1.500 1.500z" fill="#5a7af0"/><path d="M4.500 1.500l1.500-1.500v4.500l-1.500 1.500z" fill="#0a1a80"/></g></svg>
<svg style="left:1778px;top:109px;overflow:hidden" width="16" height="16" viewBox="0 0 16 16"><g transform="translate(0 1) scale(1)"><path d="M.5 .5h8l2.500 2.500v7.500h-10.500z" fill="#fff" stroke="#b8b8b8" stroke-width=".8"/><path d="M0 11.200h11" stroke="#8a8a8a" stroke-width="1"/><path d="M6.500 3.200h-4.300l2.500 2.800-2.500 2.800h4.300" fill="none" stroke="#222" stroke-width=".9"/></g><g transform="translate(8 3) scale(0.95)"><path d="M0 9c0-3 1.500-4 3.500-4s3.500 1 3.500 4z" fill="#2a58d8" stroke="#102890" stroke-width=".5"/><circle cx="3.500" cy="3" r="2.200" fill="#f2b58a"/><path d="M1.300 2.600a2.200 2.200 0 0 1 4.400 0c-1-1-3.400-1-4.400 0z" fill="#6a2a0c"/><path d="M2.500 5.200l1 1.800 1-1.800z" fill="#fff"/></g><g transform="translate(3 6.5) scale(1.1)"><path d="M0 9c0-3 1.500-4 3.500-4s3.500 1 3.500 4z" fill="#e8202c" stroke="#a00010" stroke-width=".5"/><circle cx="3.500" cy="3" r="2.200" fill="#f2b58a"/><path d="M1.300 2.600a2.200 2.200 0 0 1 4.400 0c-1-1-3.400-1-4.400 0z" fill="#6a2a0c"/><path d="M2.500 5.200l1 1.800 1-1.800z" fill="#fff"/></g></svg>
<svg style="left:1801px;top:109px;overflow:hidden" width="16" height="16" viewBox="0 0 16 16"><g transform="translate(0 1) scale(1)"><path d="M.5 .5h8l2.500 2.500v7.500h-10.500z" fill="#fff" stroke="#b8b8b8" stroke-width=".8"/><path d="M0 11.200h11" stroke="#8a8a8a" stroke-width="1"/><path d="M6.500 3.200h-4.300l2.500 2.800-2.500 2.800h4.300" fill="none" stroke="#222" stroke-width=".9"/></g><path d="M9 4v7" stroke="#888" stroke-width="1"/><g transform="translate(9 0) scale(1)"><path d="M0 1.500h4.500v4.500h-4.500z" fill="#e81414"/><path d="M0 1.500l1.500-1.500h4.500l-1.500 1.500z" fill="#ff6a6a"/><path d="M4.500 1.500l1.500-1.500v4.500l-1.500 1.500z" fill="#a00000"/></g><g transform="translate(6 11) scale(1.1)"><path d="M0 1h6.500v3h-6.500z" fill="#2020b0"/><path d="M0 1l1-1h6.500l-1 1z" fill="#5a5ae0"/><path d="M6.500 1l1-1v3l-1 1z" fill="#080850"/><path d="M1 2.500h1M2.800 2.500h1M4.600 2.500h1" stroke="#ffe060" stroke-width="1"/></g></svg>
<svg style="left:1824px;top:109px;overflow:hidden" width="16" height="16" viewBox="0 0 16 16"><g transform="translate(0 1) scale(1)"><path d="M.5 .5h8l2.500 2.500v7.500h-10.500z" fill="#fff" stroke="#b8b8b8" stroke-width=".8"/><path d="M0 11.200h11" stroke="#8a8a8a" stroke-width="1"/><path d="M6.500 3.200h-4.300l2.500 2.800-2.500 2.800h4.300" fill="none" stroke="#222" stroke-width=".9"/></g><path d="M9 4v7" stroke="#888" stroke-width="1"/><g transform="translate(9 0) scale(1)"><path d="M0 1.500h4.500v4.500h-4.500z" fill="#e81414"/><path d="M0 1.500l1.500-1.500h4.500l-1.500 1.500z" fill="#ff6a6a"/><path d="M4.500 1.500l1.500-1.500v4.500l-1.500 1.500z" fill="#a00000"/></g><g transform="translate(8 11) scale(1.0)"><path d="M0 1h6.500v3h-6.500z" fill="#f08a18"/><path d="M0 1l1-1h6.500l-1 1z" fill="#5a5ae0"/><path d="M6.500 1l1-1v3l-1 1z" fill="#a04800"/><path d="M1 2.500h1M2.800 2.500h1M4.600 2.500h1" stroke="#703000" stroke-width="1"/></g></svg>
<svg style="left:1847px;top:109px;overflow:hidden" width="16" height="16" viewBox="0 0 16 16"><g transform="translate(0 1) scale(1)"><path d="M.5 .5h8l2.500 2.500v7.500h-10.500z" fill="#fff" stroke="#b8b8b8" stroke-width=".8"/><path d="M0 11.200h11" stroke="#8a8a8a" stroke-width="1"/><path d="M6.500 3.200h-4.300l2.500 2.800-2.500 2.800h4.300" fill="none" stroke="#222" stroke-width=".9"/></g><g transform="translate(9 3) scale(1)"><path d="M0 1.500h4.500v4.500h-4.500z" fill="#e81414"/><path d="M0 1.500l1.500-1.500h4.500l-1.500 1.500z" fill="#ff6a6a"/><path d="M4.500 1.500l1.500-1.500v4.500l-1.500 1.500z" fill="#a00000"/></g><g transform="translate(7 11) scale(1.1)"><path d="M0 1h6.500v3h-6.500z" fill="#2a70f0"/><path d="M0 1l1-1h6.500l-1 1z" fill="#5a5ae0"/><path d="M6.500 1l1-1v3l-1 1z" fill="#1040a0"/><path d="M1 2.500h1M2.800 2.500h1M4.600 2.500h1" stroke="#ffffff" stroke-width="1"/></g></svg>
<svg style="left:1870px;top:109px;overflow:hidden" width="16" height="16" viewBox="0 0 16 16"><g transform="translate(0 1) scale(1)"><path d="M.5 .5h8l2.500 2.500v7.500h-10.500z" fill="#e4e4e4" stroke="#b8b8b8" stroke-width=".8"/><path d="M0 11.200h11" stroke="#8a8a8a" stroke-width="1"/><path d="M6.500 3.200h-4.300l2.500 2.800-2.500 2.800h4.300" fill="none" stroke="#222" stroke-width=".9"/></g><path d="M8 5h6.500v9h-6.500z" fill="#9a9a9a"/><path d="M8.500 6.500h5.500M8.500 8.500h5.500M8.500 10.500h5.500M8.500 12.500h5.500" stroke="#e8e8e8" stroke-width=".9"/><path d="M7 14h8.500v1.800h-8.500z" fill="#6a6a6a"/></svg>
<svg style="left:1893px;top:109px;overflow:hidden" width="4" height="16" viewBox="0 0 4 16"><g transform="translate(0 1) scale(1)"><path d="M.5 .5h8l2.500 2.500v7.500h-10.500z" fill="#fff" stroke="#b8b8b8" stroke-width=".8"/><path d="M0 11.200h11" stroke="#8a8a8a" stroke-width="1"/><path d="M6.500 3.200h-4.300l2.500 2.800-2.500 2.800h4.300" fill="none" stroke="#222" stroke-width=".9"/></g></svg>
<div style="left:8px;top:131px;width:1890px;height:890px;background:#fffcf0;"></div>
<div style="left:8px;top:131px;width:1890px;height:1px;background:#707070;"></div>
<div style="left:8px;top:131px;width:1px;height:889px;background:#9d9d9d;"></div>
<div style="left:9px;top:131px;width:1px;height:889px;background:#6a6a6a;"></div>
<div style="left:10px;top:132px;width:1888px;height:1px;background:#ffffff;"></div>
<div style="left:10px;top:133px;width:1888px;height:17px;background:#cccccc;"></div>
<div style="left:10px;top:150px;width:1888px;height:1px;background:#757575;"></div>
<svg style="left:13px;top:133px;overflow:hidden" width="16" height="16" viewBox="0 0 16 16"><path d="M.5 .5h8l3 3v11h-11z" fill="#fdfdff" stroke="#8aa0c0"/><path d="M2.500 10v-6" stroke="#e02828" stroke-width="1.500"/><path d="M5 10v-4" stroke="#e06820" stroke-width="1.500"/><path d="M7.500 10v-5" stroke="#2a9a2a" stroke-width="1.500"/><path d="M2 11.500h7.500" stroke="#7a8aa0" stroke-width=".8"/></svg>
<div class="t" style="left:31px;top:133px;height:16px;line-height:16px;font-size:12px;color:#25252d;font-weight:bold;letter-spacing:0.065px;">Отчет  Сводный отчет по планам продаж заказам менеджеров</div>
<div style="left:1872px;top:144px;width:8px;height:2px;background:#1a1a1a;"></div>
<svg style="left:1890px;top:135px;overflow:hidden" width="8" height="11" viewBox="0 0 9 11"><path d="M.5 3.500h8v7h-8z" fill="none" stroke="#1a1a1a"/><path d="M0 4h9" stroke="#1a1a1a" stroke-width="2"/><path d="M3 3v-2.500h6" fill="none" stroke="#1a1a1a"/></svg>
<div style="left:10px;top:151px;width:1888px;height:24px;background:#ece5da;"></div>
<div style="left:10px;top:175px;width:1888px;height:1px;background:#b8af8a;"></div>
<div class="t" style="left:14px;top:155px;height:16px;line-height:16px;font-size:11px;color:#4a3a1a;letter-spacing:0.101px;">Действия</div>
<svg style="left:67px;top:161px" width="6" height="3" viewBox="0 0 6 3"><path d="M0 0h6l-3 3z" fill="#4a3410"/></svg>
<div style="left:78px;top:153px;width:1px;height:20px;background:#cbc2a4;"></div>
<div style="left:79px;top:153px;width:1px;height:20px;background:#f8f4ea;"></div>
<svg style="left:84px;top:155px;overflow:hidden" width="16" height="16" viewBox="0 0 16 16"><g transform="translate(4 0) scale(1)"><path d="M.5 .5h8v9h-8z" fill="#fbfcfe" stroke="#9ab0cc" stroke-width=".9"/><path d="M2 2.500h5M2 4.500h5M2 6.500h5" stroke="#c4d0e0" stroke-width=".8"/></g><path d="M0 6h5.500l-1.800 1.800 3 3-1.400 1.400-3-3-2.300 2.300z" fill="#2a9a2a" stroke="#116611" stroke-width=".4"/><path d="M6 14.500l4.500-4.500 4.500 4.500z" fill="#f0c040" stroke="#c89820" stroke-width=".5"/></svg>
<svg style="left:108px;top:155px;overflow:hidden" width="16" height="16" viewBox="0 0 16 16"><g transform="translate(2 0) scale(1)"><path d="M.5 .5h8v9h-8z" fill="#fbfcfe" stroke="#9ab0cc" stroke-width=".9"/><path d="M2 2.500h5M2 4.500h5M2 6.500h5" stroke="#c4d0e0" stroke-width=".8"/></g><path d="M15 3v8h-6.500l2.300-2.300-3-3 1.400-1.400 3 3z" fill="#2a9a2a" stroke="#116611" stroke-width=".4"/><path d="M0 14.500l4.500-4.500 4.500 4.500z" fill="#f0c040" stroke="#c89820" stroke-width=".5"/></svg>
<div style="left:128px;top:153px;width:1px;height:20px;background:#cbc2a4;"></div>
<div style="left:129px;top:153px;width:1px;height:20px;background:#f8f4ea;"></div>
<svg style="left:136px;top:155px;overflow:hidden" width="16" height="16" viewBox="0 0 16 16"><defs><radialGradient id="gh" cx="45%" cy="30%" r="70%"><stop offset="0" stop-color="#fff3d8"/><stop offset=".6" stop-color="#f6c878"/><stop offset="1" stop-color="#d89038"/></radialGradient></defs><circle cx="8" cy="8" r="7.600" fill="url(#gh)" stroke="#a08060" stroke-width=".8"/><text x="4.800" y="12" font-family="Liberation Sans,sans-serif" font-size="11" font-weight="bold" fill="#7a4a1a">?</text></svg>
<svg style="left:164px;top:157px" width="7" height="12" viewBox="0 0 7 12"><path d="M0 0l7 6-7 6z" fill="#0f8a0f"/></svg>
<div class="t" style="left:176px;top:155px;height:16px;line-height:16px;font-size:11px;color:#3a3020;letter-spacing:-0.128px;">Сформировать</div>
<div style="left:18px;top:184px;width:950px;height:414px;background:#fff;border:1px solid #b3ab84;"></div>
<div style="left:19px;top:185px;width:948px;height:41px;background:#f7f1de;"></div>
<div style="left:504px;top:185px;width:463px;height:20px;background:#d0cbb7;"></div>
<div style="left:40px;top:185px;width:1px;height:402px;background:#b3ab84;"></div>
<div style="left:503px;top:185px;width:1px;height:79px;background:#b3ab84;"></div>
<div style="left:41px;top:205px;width:926px;height:1px;background:#b3ab84;"></div>
<div style="left:19px;top:226px;width:948px;height:1px;background:#b3ab84;"></div>
<div class="t" style="left:45px;top:187px;height:16px;line-height:16px;font-size:11px;color:#30281a;">Параметр</div>
<div class="t" style="left:508px;top:187px;height:16px;line-height:16px;font-size:11px;color:#30281a;">Значение</div>
<div class="t" style="left:45px;top:208px;height:16px;line-height:16px;font-size:11px;color:#30281a;">Дата начала</div>
<div class="t" style="left:508px;top:208px;height:16px;line-height:16px;font-size:11px;color:#30281a;">Дата окончания</div>
<div style="left:504px;top:227px;width:463px;height:18px;background:#526ac0;"></div>
<div style="left:23px;top:230px;width:13px;height:13px;background:#fff;border:1px solid #a9a17c;"></div>
<svg style="left:23px;top:230px" width="13" height="13" viewBox="0 0 13 13"><path d="M3.300 5.300l2 3 4-5" fill="none" stroke="#000" stroke-width="2" stroke-linejoin="miter"/></svg>
<div class="t" style="left:47px;top:228.5px;height:16px;line-height:16px;font-size:11px;color:#000;">Период анализа минимальной цены</div>
<div class="t" style="left:508px;top:228.5px;height:16px;line-height:16px;font-size:11px;color:#fff;">Произвольный период</div>
<div style="left:41px;top:245px;width:926px;height:1px;background:#b3ab84;"></div>
<div class="t" style="left:45px;top:247.5px;height:16px;line-height:16px;font-size:11px;color:#000;">01.08.2018</div>
<div class="t" style="left:508px;top:247.5px;height:16px;line-height:16px;font-size:11px;color:#000;">31.12.2018</div>
<div style="left:19px;top:264px;width:948px;height:1px;background:#b3ab84;"></div>
<div style="left:23px;top:267px;width:13px;height:13px;background:#fff;border:1px solid #a9a17c;"></div>
<svg style="left:23px;top:267px" width="13" height="13" viewBox="0 0 13 13"><path d="M3.300 5.300l2 3 4-5" fill="none" stroke="#000" stroke-width="2" stroke-linejoin="miter"/></svg>
<div class="t" style="left:47px;top:266.5px;height:16px;line-height:16px;font-size:11px;color:#000;">Период</div>
<div class="t" style="left:508px;top:266.5px;height:16px;line-height:16px;font-size:11px;color:#000;">Произвольная дата</div>
<div class="t" style="left:740px;top:266.5px;height:16px;line-height:16px;font-size:11px;color:#000;">14.01.2020 0:00:00</div>
<div style="left:19px;top:283px;width:948px;height:1px;background:#b3ab84;"></div>
<div style="left:23px;top:286px;width:13px;height:13px;background:#fff;border:1px solid #a9a17c;"></div>
<svg style="left:23px;top:286px" width="13" height="13" viewBox="0 0 13 13"><path d="M3.300 5.300l2 3 4-5" fill="none" stroke="#000" stroke-width="2" stroke-linejoin="miter"/></svg>
<div class="t" style="left:47px;top:285.5px;height:16px;line-height:16px;font-size:11px;color:#000;">Тип исо</div>
<div style="left:19px;top:302px;width:948px;height:1px;background:#b3ab84;"></div>
<div style="left:23px;top:305px;width:13px;height:13px;background:#fff;border:1px solid #a9a17c;"></div>
<svg style="left:23px;top:305px" width="13" height="13" viewBox="0 0 13 13"><path d="M3.300 5.300l2 3 4-5" fill="none" stroke="#000" stroke-width="2" stroke-linejoin="miter"/></svg>
<div class="t" style="left:47px;top:304.5px;height:16px;line-height:16px;font-size:11px;color:#000;">Тип гост</div>
<div style="left:19px;top:321px;width:948px;height:1px;background:#b3ab84;"></div>
<div style="left:23px;top:324px;width:13px;height:13px;background:#fff;border:1px solid #a9a17c;"></div>
<svg style="left:23px;top:324px" width="13" height="13" viewBox="0 0 13 13"><path d="M3.300 5.300l2 3 4-5" fill="none" stroke="#000" stroke-width="2" stroke-linejoin="miter"/></svg>
<div class="t" style="left:47px;top:323.5px;height:16px;line-height:16px;font-size:11px;color:#000;">Валюта</div>
<div style="left:19px;top:340px;width:948px;height:1px;background:#b3ab84;"></div>
<div style="left:23px;top:343px;width:13px;height:13px;background:#fff;border:1px solid #a9a17c;"></div>
<svg style="left:23px;top:343px" width="13" height="13" viewBox="0 0 13 13"><path d="M3.300 5.300l2 3 4-5" fill="none" stroke="#000" stroke-width="2" stroke-linejoin="miter"/></svg>
<div class="t" style="left:47px;top:342.5px;height:16px;line-height:16px;font-size:11px;color:#000;">Тип конструктивная группа</div>
<div style="left:19px;top:359px;width:948px;height:1px;background:#b3ab84;"></div>
<div style="left:23px;top:362px;width:13px;height:13px;background:#fff;border:1px solid #a9a17c;"></div>
<svg style="left:23px;top:362px" width="13" height="13" viewBox="0 0 13 13"><path d="M3.300 5.300l2 3 4-5" fill="none" stroke="#000" stroke-width="2" stroke-linejoin="miter"/></svg>
<div class="t" style="left:47px;top:361.5px;height:16px;line-height:16px;font-size:11px;color:#000;">Дата потребностей по менеджерам</div>
<div class="t" style="left:508px;top:361.5px;height:16px;line-height:16px;font-size:11px;color:#000;">Произвольная дата</div>
<div class="t" style="left:740px;top:361.5px;height:16px;line-height:16px;font-size:11px;color:#000;">01.04.2019</div>
<div style="left:19px;top:378px;width:948px;height:1px;background:#b3ab84;"></div>
<div style="left:23px;top:381px;width:13px;height:13px;background:#fff;border:1px solid #a9a17c;"></div>
<svg style="left:23px;top:381px" width="13" height="13" viewBox="0 0 13 13"><path d="M3.300 5.300l2 3 4-5" fill="none" stroke="#000" stroke-width="2" stroke-linejoin="miter"/></svg>
<div class="t" style="left:47px;top:380.5px;height:16px;line-height:16px;font-size:11px;color:#000;">Количество месяцев</div>
<div class="t" style="left:900px;top:380.5px;height:16px;line-height:16px;font-size:11px;color:#000;width:63px;text-align:right;">12</div>
<div style="left:19px;top:397px;width:948px;height:1px;background:#b3ab84;"></div>
<div style="left:23px;top:400px;width:13px;height:13px;background:#fff;border:1px solid #a9a17c;"></div>
<svg style="left:23px;top:400px" width="13" height="13" viewBox="0 0 13 13"><path d="M3.300 5.300l2 3 4-5" fill="none" stroke="#000" stroke-width="2" stroke-linejoin="miter"/></svg>
<div class="t" style="left:47px;top:399.5px;height:16px;line-height:16px;font-size:11px;color:#000;">Склад остатков</div>
<div class="t" style="left:508px;top:399.5px;height:16px;line-height:16px;font-size:11px;color:#000;">Основной; Транзитный склад</div>
<div style="left:19px;top:416px;width:948px;height:1px;background:#b3ab84;"></div>
<div style="left:23px;top:419px;width:13px;height:13px;background:#fff;border:1px solid #a9a17c;"></div>
<svg style="left:23px;top:419px" width="13" height="13" viewBox="0 0 13 13"><path d="M3.300 5.300l2 3 4-5" fill="none" stroke="#000" stroke-width="2" stroke-linejoin="miter"/></svg>
<div class="t" style="left:47px;top:418.5px;height:16px;line-height:16px;font-size:11px;color:#000;">Варинат планирования</div>
<div class="t" style="left:508px;top:418.5px;height:16px;line-height:16px;font-size:11px;color:#000;">По фактической потребности</div>
<div style="left:19px;top:435px;width:948px;height:1px;background:#b3ab84;"></div>
<div style="left:23px;top:438px;width:13px;height:13px;background:#fff;border:1px solid #a9a17c;"></div>
<svg style="left:23px;top:438px" width="13" height="13" viewBox="0 0 13 13"><path d="M3.300 5.300l2 3 4-5" fill="none" stroke="#000" stroke-width="2" stroke-linejoin="miter"/></svg>
<div class="t" style="left:47px;top:437.5px;height:16px;line-height:16px;font-size:11px;color:#000;">Не выводить постоянные потребности</div>
<div class="t" style="left:508px;top:437.5px;height:16px;line-height:16px;font-size:11px;color:#000;">Не выводить</div>
<div style="left:19px;top:454px;width:948px;height:1px;background:#b3ab84;"></div>
<div style="left:23px;top:457px;width:13px;height:13px;background:#fff;border:1px solid #a9a17c;"></div>
<svg style="left:23px;top:457px" width="13" height="13" viewBox="0 0 13 13"><path d="M3.300 5.300l2 3 4-5" fill="none" stroke="#000" stroke-width="2" stroke-linejoin="miter"/></svg>
<div class="t" style="left:47px;top:456.5px;height:16px;line-height:16px;font-size:11px;color:#000;">Только не обеспеченные</div>
<div class="t" style="left:508px;top:456.5px;height:16px;line-height:16px;font-size:11px;color:#000;">Только не обеспеченные</div>
<div style="left:19px;top:473px;width:948px;height:1px;background:#b3ab84;"></div>
<div style="left:23px;top:477px;width:13px;height:13px;background:#fff;border:1px solid #a9a17c;"></div>
<svg style="left:23px;top:477px" width="13" height="13" viewBox="0 0 13 13"><path d="M3.300 5.300l2 3 4-5" fill="none" stroke="#000" stroke-width="2" stroke-linejoin="miter"/></svg>
<div class="t" style="left:47px;top:475.5px;height:16px;line-height:16px;font-size:11px;color:#000;">Период потрбеностей</div>
<div class="t" style="left:508px;top:475.5px;height:16px;line-height:16px;font-size:11px;color:#000;">Произвольный период</div>
<div class="t" style="left:45px;top:494.5px;height:16px;line-height:16px;font-size:11px;color:#000;">01.12.2017</div>
<div class="t" style="left:508px;top:494.5px;height:16px;line-height:16px;font-size:11px;color:#000;">03.12.2018</div>
<div style="left:19px;top:511px;width:948px;height:1px;background:#b3ab84;"></div>
<div style="left:23px;top:514px;width:13px;height:13px;background:#fff;border:1px solid #a9a17c;"></div>
<svg style="left:23px;top:514px" width="13" height="13" viewBox="0 0 13 13"><path d="M3.300 5.300l2 3 4-5" fill="none" stroke="#000" stroke-width="2" stroke-linejoin="miter"/></svg>
<div class="t" style="left:47px;top:513.5px;height:16px;line-height:16px;font-size:11px;color:#000;">Тип цен "Минимальная"</div>
<div class="t" style="left:508px;top:513.5px;height:16px;line-height:16px;font-size:11px;color:#000;">Минимальная</div>
<div style="left:19px;top:530px;width:948px;height:1px;background:#b3ab84;"></div>
<div style="left:23px;top:533px;width:13px;height:13px;background:#fff;border:1px solid #a9a17c;"></div>
<div class="t" style="left:47px;top:532.5px;height:16px;line-height:16px;font-size:11px;color:#000;">Выводить подробные сведения о номенклатурной группе</div>
<div class="t" style="left:508px;top:532.5px;height:16px;line-height:16px;font-size:11px;color:#000;">Да</div>
<div style="left:19px;top:549px;width:948px;height:1px;background:#b3ab84;"></div>
<div style="left:23px;top:552px;width:13px;height:13px;background:#fff;border:1px solid #a9a17c;"></div>
<div class="t" style="left:47px;top:551.5px;height:16px;line-height:16px;font-size:11px;color:#000;">Выводить цены конкурентов</div>
<div class="t" style="left:508px;top:551.5px;height:16px;line-height:16px;font-size:11px;color:#000;">Да</div>
<div style="left:19px;top:568px;width:948px;height:1px;background:#b3ab84;"></div>
<div style="left:23px;top:571px;width:13px;height:13px;background:#fff;border:1px solid #a9a17c;"></div>
<svg style="left:23px;top:571px" width="13" height="13" viewBox="0 0 13 13"><path d="M3.300 5.300l2 3 4-5" fill="none" stroke="#000" stroke-width="2" stroke-linejoin="miter"/></svg>
<div class="t" style="left:47px;top:570.5px;height:16px;line-height:16px;font-size:11px;color:#000;">Дата начала поиска закупочной цены</div>
<div class="t" style="left:508px;top:570.5px;height:16px;line-height:16px;font-size:11px;color:#000;">Произвольная дата</div>
<div class="t" style="left:740px;top:570.5px;height:16px;line-height:16px;font-size:11px;color:#000;">01.03.2018</div>
<div style="left:19px;top:587px;width:948px;height:1px;background:#b3ab84;"></div>
<div style="left:973px;top:184px;width:925px;height:414px;background:#fff;border:1px solid #b3ab84;border-right:none;"></div>
<div style="left:974px;top:185px;width:21px;height:20px;background:#f7f1de;"></div>
<div style="left:996px;top:185px;width:902px;height:20px;background:#d0cbb7;"></div>
<div style="left:995px;top:185px;width:1px;height:59px;background:#b3ab84;"></div>
<div style="left:974px;top:205px;width:924px;height:1px;background:#b3ab84;"></div>
<div style="left:974px;top:224px;width:924px;height:1px;background:#b3ab84;"></div>
<div style="left:974px;top:243px;width:924px;height:1px;background:#b3ab84;"></div>
<div class="t" style="left:1000px;top:187px;height:16px;line-height:16px;font-size:11px;color:#30281a;">Представление</div>
<svg style="left:1004px;top:209px" width="10" height="10" viewBox="0 0 10 10"><circle cx="5" cy="5" r="4.300" fill="#fff" stroke="#a8a8a8" stroke-width="1"/><path d="M2.500 5h5" stroke="#555" stroke-width="1"/></svg>
<div style="left:1019px;top:206px;width:36px;height:18px;background:#526ac0;"></div>
<div class="t" style="left:1021px;top:207px;height:16px;line-height:16px;font-size:11px;color:#fff;letter-spacing:-0.226px;">Отбор</div>
<div style="left:978px;top:227px;width:13px;height:13px;background:#fff;border:1px solid #a9a17c;"></div>
<div style="left:1041px;top:232px;width:10px;height:3px;background:#7a9ad8;border:1px solid #5a72b0;border-radius:1px;"></div>
<div class="t" style="left:1060px;top:226.5px;height:16px;line-height:16px;font-size:11px;color:#000;letter-spacing:0.016px;">Номенклатура номенклатурная группа</div>
<div class="t" style="left:1341px;top:226.5px;height:16px;line-height:16px;font-size:11px;color:#000;letter-spacing:0.056px;">В списке</div>
<div class="t" style="left:1586px;top:226.5px;height:16px;line-height:16px;font-size:11px;color:#000;letter-spacing:-0.112px;">808106; 808214; 8101 (51101); 8102 (51102); 8103; 8104; 8105;</div>
<div style="left:18px;top:602px;width:1880px;height:418px;background:#fff;border:1px solid #ada47b;border-right:none;"></div>
<div style="left:19px;top:603px;width:1879px;height:15px;background:#fdfaf0;"></div>
<div style="left:19px;top:618px;width:35px;height:385px;background:#fdfaf0;"></div>
<div style="left:54px;top:603px;width:75px;height:15px;background:linear-gradient(180deg,#fffdf6,#fbf7ea);border-right:1px solid #c9c1a2;border-bottom:1px solid #c9c1a2;border-left:1px solid #fff;border-top:1px solid #fff;"></div>
<div class="t" style="left:54px;top:604px;width:74px;height:15px;line-height:15px;text-align:center;font-size:10.670px;color:#4c3a22;">1</div>
<div style="left:129px;top:603px;width:192px;height:15px;background:linear-gradient(180deg,#ebe8dd,#f1eee4);border-right:1px solid #c9c1a2;border-bottom:1px solid #c9c1a2;"></div>
<div class="t" style="left:129px;top:604px;width:191px;height:15px;line-height:15px;text-align:center;font-size:10.670px;color:#4c3a22;font-weight:bold;">2</div>
<div style="left:321px;top:603px;width:63px;height:15px;background:linear-gradient(180deg,#fffdf6,#fbf7ea);border-right:1px solid #c9c1a2;border-bottom:1px solid #c9c1a2;border-left:1px solid #fff;border-top:1px solid #fff;"></div>
<div class="t" style="left:321px;top:604px;width:62px;height:15px;line-height:15px;text-align:center;font-size:10.670px;color:#4c3a22;">3</div>
<div style="left:384px;top:603px;width:81px;height:15px;background:linear-gradient(180deg,#fffdf6,#fbf7ea);border-right:1px solid #c9c1a2;border-bottom:1px solid #c9c1a2;border-left:1px solid #fff;border-top:1px solid #fff;"></div>
<div class="t" style="left:384px;top:604px;width:80px;height:15px;line-height:15px;text-align:center;font-size:10.670px;color:#4c3a22;">4</div>
<div style="left:465px;top:603px;width:82px;height:15px;background:linear-gradient(180deg,#fffdf6,#fbf7ea);border-right:1px solid #c9c1a2;border-bottom:1px solid #c9c1a2;border-left:1px solid #fff;border-top:1px solid #fff;"></div>
<div class="t" style="left:465px;top:604px;width:81px;height:15px;line-height:15px;text-align:center;font-size:10.670px;color:#4c3a22;">5</div>
<div style="left:547px;top:603px;width:63px;height:15px;background:linear-gradient(180deg,#fffdf6,#fbf7ea);border-right:1px solid #c9c1a2;border-bottom:1px solid #c9c1a2;border-left:1px solid #fff;border-top:1px solid #fff;"></div>
<div class="t" style="left:547px;top:604px;width:62px;height:15px;line-height:15px;text-align:center;font-size:10.670px;color:#4c3a22;">6</div>
<div style="left:610px;top:603px;width:63px;height:15px;background:linear-gradient(180deg,#fffdf6,#fbf7ea);border-right:1px solid #c9c1a2;border-bottom:1px solid #c9c1a2;border-left:1px solid #fff;border-top:1px solid #fff;"></div>
<div class="t" style="left:610px;top:604px;width:62px;height:15px;line-height:15px;text-align:center;font-size:10.670px;color:#4c3a22;">9</div>
<div style="left:673px;top:603px;width:63px;height:15px;background:linear-gradient(180deg,#fffdf6,#fbf7ea);border-right:1px solid #c9c1a2;border-bottom:1px solid #c9c1a2;border-left:1px solid #fff;border-top:1px solid #fff;"></div>
<div class="t" style="left:673px;top:604px;width:62px;height:15px;line-height:15px;text-align:center;font-size:10.670px;color:#4c3a22;">10</div>
<div style="left:736px;top:603px;width:71px;height:15px;background:linear-gradient(180deg,#fffdf6,#fbf7ea);border-right:1px solid #c9c1a2;border-bottom:1px solid #c9c1a2;border-left:1px solid #fff;border-top:1px solid #fff;"></div>
<div class="t" style="left:736px;top:604px;width:70px;height:15px;line-height:15px;text-align:center;font-size:10.670px;color:#4c3a22;">44</div>
<div style="left:807px;top:603px;width:71px;height:15px;background:linear-gradient(180deg,#fffdf6,#fbf7ea);border-right:1px solid #c9c1a2;border-bottom:1px solid #c9c1a2;border-left:1px solid #fff;border-top:1px solid #fff;"></div>
<div class="t" style="left:807px;top:604px;width:70px;height:15px;line-height:15px;text-align:center;font-size:10.670px;color:#4c3a22;">45</div>
<div style="left:878px;top:603px;width:63px;height:15px;background:linear-gradient(180deg,#fffdf6,#fbf7ea);border-right:1px solid #c9c1a2;border-bottom:1px solid #c9c1a2;border-left:1px solid #fff;border-top:1px solid #fff;"></div>
<div class="t" style="left:878px;top:604px;width:62px;height:15px;line-height:15px;text-align:center;font-size:10.670px;color:#4c3a22;">46</div>
<div style="left:941px;top:603px;width:63px;height:15px;background:linear-gradient(180deg,#fffdf6,#fbf7ea);border-right:1px solid #c9c1a2;border-bottom:1px solid #c9c1a2;border-left:1px solid #fff;border-top:1px solid #fff;"></div>
<div class="t" style="left:941px;top:604px;width:62px;height:15px;line-height:15px;text-align:center;font-size:10.670px;color:#4c3a22;">47</div>
<div style="left:1004px;top:603px;width:63px;height:15px;background:linear-gradient(180deg,#fffdf6,#fbf7ea);border-right:1px solid #c9c1a2;border-bottom:1px solid #c9c1a2;border-left:1px solid #fff;border-top:1px solid #fff;"></div>
<div class="t" style="left:1004px;top:604px;width:62px;height:15px;line-height:15px;text-align:center;font-size:10.670px;color:#4c3a22;">48</div>
<div style="left:1067px;top:603px;width:63px;height:15px;background:linear-gradient(180deg,#fffdf6,#fbf7ea);border-right:1px solid #c9c1a2;border-bottom:1px solid #c9c1a2;border-left:1px solid #fff;border-top:1px solid #fff;"></div>
<div class="t" style="left:1067px;top:604px;width:62px;height:15px;line-height:15px;text-align:center;font-size:10.670px;color:#4c3a22;">49</div>
<div style="left:1130px;top:603px;width:63px;height:15px;background:linear-gradient(180deg,#fffdf6,#fbf7ea);border-right:1px solid #c9c1a2;border-bottom:1px solid #c9c1a2;border-left:1px solid #fff;border-top:1px solid #fff;"></div>
<div class="t" style="left:1130px;top:604px;width:62px;height:15px;line-height:15px;text-align:center;font-size:10.670px;color:#4c3a22;">50</div>
<div style="left:1193px;top:603px;width:63px;height:15px;background:linear-gradient(180deg,#fffdf6,#fbf7ea);border-right:1px solid #c9c1a2;border-bottom:1px solid #c9c1a2;border-left:1px solid #fff;border-top:1px solid #fff;"></div>
<div class="t" style="left:1193px;top:604px;width:62px;height:15px;line-height:15px;text-align:center;font-size:10.670px;color:#4c3a22;">51</div>
<div style="left:1256px;top:603px;width:63px;height:15px;background:linear-gradient(180deg,#fffdf6,#fbf7ea);border-right:1px solid #c9c1a2;border-bottom:1px solid #c9c1a2;border-left:1px solid #fff;border-top:1px solid #fff;"></div>
<div class="t" style="left:1256px;top:604px;width:62px;height:15px;line-height:15px;text-align:center;font-size:10.670px;color:#4c3a22;">52</div>
<div style="left:1319px;top:603px;width:63px;height:15px;background:linear-gradient(180deg,#fffdf6,#fbf7ea);border-right:1px solid #c9c1a2;border-bottom:1px solid #c9c1a2;border-left:1px solid #fff;border-top:1px solid #fff;"></div>
<div class="t" style="left:1319px;top:604px;width:62px;height:15px;line-height:15px;text-align:center;font-size:10.670px;color:#4c3a22;">53</div>
<div style="left:1382px;top:603px;width:63px;height:15px;background:linear-gradient(180deg,#fffdf6,#fbf7ea);border-right:1px solid #c9c1a2;border-bottom:1px solid #c9c1a2;border-left:1px solid #fff;border-top:1px solid #fff;"></div>
<div class="t" style="left:1382px;top:604px;width:62px;height:15px;line-height:15px;text-align:center;font-size:10.670px;color:#4c3a22;">54</div>
<div style="left:1445px;top:603px;width:63px;height:15px;background:linear-gradient(180deg,#fffdf6,#fbf7ea);border-right:1px solid #c9c1a2;border-bottom:1px solid #c9c1a2;border-left:1px solid #fff;border-top:1px solid #fff;"></div>
<div class="t" style="left:1445px;top:604px;width:62px;height:15px;line-height:15px;text-align:center;font-size:10.670px;color:#4c3a22;">55</div>
<div style="left:1508px;top:603px;width:63px;height:15px;background:linear-gradient(180deg,#fffdf6,#fbf7ea);border-right:1px solid #c9c1a2;border-bottom:1px solid #c9c1a2;border-left:1px solid #fff;border-top:1px solid #fff;"></div>
<div class="t" style="left:1508px;top:604px;width:62px;height:15px;line-height:15px;text-align:center;font-size:10.670px;color:#4c3a22;">56</div>
<div style="left:1571px;top:603px;width:63px;height:15px;background:linear-gradient(180deg,#fffdf6,#fbf7ea);border-right:1px solid #c9c1a2;border-bottom:1px solid #c9c1a2;border-left:1px solid #fff;border-top:1px solid #fff;"></div>
<div class="t" style="left:1571px;top:604px;width:62px;height:15px;line-height:15px;text-align:center;font-size:10.670px;color:#4c3a22;">57</div>
<div style="left:1634px;top:603px;width:63px;height:15px;background:linear-gradient(180deg,#fffdf6,#fbf7ea);border-right:1px solid #c9c1a2;border-bottom:1px solid #c9c1a2;border-left:1px solid #fff;border-top:1px solid #fff;"></div>
<div class="t" style="left:1634px;top:604px;width:62px;height:15px;line-height:15px;text-align:center;font-size:10.670px;color:#4c3a22;">58</div>
<div style="left:1697px;top:603px;width:63px;height:15px;background:linear-gradient(180deg,#fffdf6,#fbf7ea);border-right:1px solid #c9c1a2;border-bottom:1px solid #c9c1a2;border-left:1px solid #fff;border-top:1px solid #fff;"></div>
<div class="t" style="left:1697px;top:604px;width:62px;height:15px;line-height:15px;text-align:center;font-size:10.670px;color:#4c3a22;">59</div>
<div style="left:1760px;top:603px;width:63px;height:15px;background:linear-gradient(180deg,#fffdf6,#fbf7ea);border-right:1px solid #c9c1a2;border-bottom:1px solid #c9c1a2;border-left:1px solid #fff;border-top:1px solid #fff;"></div>
<div class="t" style="left:1760px;top:604px;width:62px;height:15px;line-height:15px;text-align:center;font-size:10.670px;color:#4c3a22;">60</div>
<div style="left:1823px;top:603px;width:63px;height:15px;background:linear-gradient(180deg,#fffdf6,#fbf7ea);border-right:1px solid #c9c1a2;border-bottom:1px solid #c9c1a2;border-left:1px solid #fff;border-top:1px solid #fff;"></div>
<div class="t" style="left:1823px;top:604px;width:62px;height:15px;line-height:15px;text-align:center;font-size:10.670px;color:#4c3a22;">61</div>
<div style="left:1886px;top:603px;width:12px;height:15px;background:linear-gradient(180deg,#fffdf6,#fbf7ea);border-bottom:1px solid #c9c1a2;"></div>
<div style="left:19px;top:603px;width:35px;height:15px;background:linear-gradient(180deg,#fffdf6,#fbf7ea);border-right:1px solid #c9c1a2;border-bottom:1px solid #c9c1a2;"></div>
<div style="left:19px;top:618px;width:35px;height:29px;background:linear-gradient(90deg,#fffdf6,#fbf7ea);border-right:1px solid #c9c1a2;border-bottom:1px solid #c9c1a2;border-top:1px solid #fff;"></div>
<div class="t" style="left:19px;top:618px;width:34px;height:28px;line-height:28px;text-align:center;font-size:10.670px;color:#4c3a22;">1</div>
<div style="left:19px;top:647px;width:35px;height:15px;background:linear-gradient(90deg,#fffdf6,#fbf7ea);border-right:1px solid #c9c1a2;border-bottom:1px solid #c9c1a2;border-top:1px solid #fff;"></div>
<div class="t" style="left:19px;top:647px;width:34px;height:14px;line-height:14px;text-align:center;font-size:10.670px;color:#4c3a22;">2</div>
<div style="left:19px;top:662px;width:35px;height:43px;background:linear-gradient(90deg,#fffdf6,#fbf7ea);border-right:1px solid #c9c1a2;border-bottom:1px solid #c9c1a2;border-top:1px solid #fff;"></div>
<div class="t" style="left:19px;top:662px;width:34px;height:42px;line-height:42px;text-align:center;font-size:10.670px;color:#4c3a22;">3</div>
<div style="left:19px;top:705px;width:35px;height:43px;background:linear-gradient(90deg,#fffdf6,#fbf7ea);border-right:1px solid #c9c1a2;border-bottom:1px solid #c9c1a2;border-top:1px solid #fff;"></div>
<div class="t" style="left:19px;top:705px;width:34px;height:42px;line-height:43px;text-align:center;font-size:10.670px;color:#4c3a22;">16091</div>
<div style="left:19px;top:748px;width:35px;height:15px;background:linear-gradient(90deg,#fffdf6,#fbf7ea);border-right:1px solid #c9c1a2;border-bottom:1px solid #c9c1a2;border-top:1px solid #fff;"></div>
<div class="t" style="left:19px;top:748px;width:34px;height:14px;line-height:15px;text-align:center;font-size:10.670px;color:#4c3a22;">16092</div>
<div style="left:19px;top:763px;width:35px;height:15px;background:linear-gradient(90deg,#fffdf6,#fbf7ea);border-right:1px solid #c9c1a2;border-bottom:1px solid #c9c1a2;border-top:1px solid #fff;"></div>
<div class="t" style="left:19px;top:763px;width:34px;height:14px;line-height:15px;text-align:center;font-size:10.670px;color:#4c3a22;">16093</div>
<div style="left:19px;top:778px;width:35px;height:15px;background:linear-gradient(90deg,#fffdf6,#fbf7ea);border-right:1px solid #c9c1a2;border-bottom:1px solid #c9c1a2;border-top:1px solid #fff;"></div>
<div class="t" style="left:19px;top:778px;width:34px;height:14px;line-height:15px;text-align:center;font-size:10.670px;color:#4c3a22;">16094</div>
<div style="left:19px;top:793px;width:35px;height:15px;background:linear-gradient(90deg,#fffdf6,#fbf7ea);border-right:1px solid #c9c1a2;border-bottom:1px solid #c9c1a2;border-top:1px solid #fff;"></div>
<div class="t" style="left:19px;top:793px;width:34px;height:14px;line-height:15px;text-align:center;font-size:10.670px;color:#4c3a22;">16095</div>
<div style="left:19px;top:808px;width:35px;height:15px;background:linear-gradient(90deg,#fffdf6,#fbf7ea);border-right:1px solid #c9c1a2;border-bottom:1px solid #c9c1a2;border-top:1px solid #fff;"></div>
<div class="t" style="left:19px;top:808px;width:34px;height:14px;line-height:15px;text-align:center;font-size:10.670px;color:#4c3a22;">16096</div>
<div style="left:19px;top:823px;width:35px;height:15px;background:linear-gradient(90deg,#fffdf6,#fbf7ea);border-right:1px solid #c9c1a2;border-bottom:1px solid #c9c1a2;border-top:1px solid #fff;"></div>
<div class="t" style="left:19px;top:823px;width:34px;height:14px;line-height:15px;text-align:center;font-size:10.670px;color:#4c3a22;">16097</div>
<div style="left:19px;top:838px;width:35px;height:15px;background:linear-gradient(90deg,#fffdf6,#fbf7ea);border-right:1px solid #c9c1a2;border-bottom:1px solid #c9c1a2;border-top:1px solid #fff;"></div>
<div class="t" style="left:19px;top:838px;width:34px;height:14px;line-height:15px;text-align:center;font-size:10.670px;color:#4c3a22;">16098</div>
<div style="left:19px;top:853px;width:35px;height:15px;background:linear-gradient(90deg,#fffdf6,#fbf7ea);border-right:1px solid #c9c1a2;border-bottom:1px solid #c9c1a2;border-top:1px solid #fff;"></div>
<div class="t" style="left:19px;top:853px;width:34px;height:14px;line-height:15px;text-align:center;font-size:10.670px;color:#4c3a22;">16099</div>
<div style="left:19px;top:868px;width:35px;height:15px;background:linear-gradient(90deg,#fffdf6,#fbf7ea);border-right:1px solid #c9c1a2;border-bottom:1px solid #c9c1a2;border-top:1px solid #fff;"></div>
<div class="t" style="left:19px;top:868px;width:34px;height:14px;line-height:15px;text-align:center;font-size:10.670px;color:#4c3a22;">16100</div>
<div style="left:19px;top:883px;width:35px;height:15px;background:linear-gradient(90deg,#fffdf6,#fbf7ea);border-right:1px solid #c9c1a2;border-bottom:1px solid #c9c1a2;border-top:1px solid #fff;"></div>
<div class="t" style="left:19px;top:883px;width:34px;height:14px;line-height:15px;text-align:center;font-size:10.670px;color:#4c3a22;">16101</div>
<div style="left:19px;top:898px;width:35px;height:15px;background:linear-gradient(90deg,#fffdf6,#fbf7ea);border-right:1px solid #c9c1a2;border-bottom:1px solid #c9c1a2;border-top:1px solid #fff;"></div>
<div class="t" style="left:19px;top:898px;width:34px;height:14px;line-height:15px;text-align:center;font-size:10.670px;color:#4c3a22;">16102</div>
<div style="left:19px;top:913px;width:35px;height:15px;background:linear-gradient(90deg,#fffdf6,#fbf7ea);border-right:1px solid #c9c1a2;border-bottom:1px solid #c9c1a2;border-top:1px solid #fff;"></div>
<div class="t" style="left:19px;top:913px;width:34px;height:14px;line-height:15px;text-align:center;font-size:10.670px;color:#4c3a22;">16103</div>
<div style="left:19px;top:928px;width:35px;height:15px;background:linear-gradient(90deg,#fffdf6,#fbf7ea);border-right:1px solid #c9c1a2;border-bottom:1px solid #c9c1a2;border-top:1px solid #fff;"></div>
<div class="t" style="left:19px;top:928px;width:34px;height:14px;line-height:15px;text-align:center;font-size:10.670px;color:#4c3a22;">16104</div>
<div style="left:19px;top:943px;width:35px;height:15px;background:linear-gradient(90deg,#fffdf6,#fbf7ea);border-right:1px solid #c9c1a2;border-bottom:1px solid #c9c1a2;border-top:1px solid #fff;"></div>
<div class="t" style="left:19px;top:943px;width:34px;height:14px;line-height:15px;text-align:center;font-size:10.670px;color:#4c3a22;">16105</div>
<div style="left:19px;top:958px;width:35px;height:15px;background:linear-gradient(90deg,#fffdf6,#fbf7ea);border-right:1px solid #c9c1a2;border-bottom:1px solid #c9c1a2;border-top:1px solid #fff;"></div>
<div class="t" style="left:19px;top:958px;width:34px;height:14px;line-height:15px;text-align:center;font-size:10.670px;color:#4c3a22;">16106</div>
<div style="left:19px;top:973px;width:35px;height:15px;background:linear-gradient(90deg,#fffdf6,#fbf7ea);border-right:1px solid #c9c1a2;border-bottom:1px solid #c9c1a2;border-top:1px solid #fff;"></div>
<div class="t" style="left:19px;top:973px;width:34px;height:14px;line-height:15px;text-align:center;font-size:10.670px;color:#4c3a22;">16107</div>
<div style="left:19px;top:988px;width:35px;height:15px;background:linear-gradient(90deg,#fffdf6,#fbf7ea);border-right:1px solid #c9c1a2;border-bottom:1px solid #c9c1a2;border-top:1px solid #fff;"></div>
<div class="t" style="left:19px;top:988px;width:34px;height:14px;line-height:15px;text-align:center;font-size:10.670px;color:#4c3a22;">16108</div>
<div style="left:19px;top:603px;width:1879px;height:1px;background:#c4bc9a;"></div>
<div style="left:19px;top:603px;width:1px;height:400px;background:#c4bc9a;"></div>
<div style="left:54px;top:618px;width:619px;height:86px;background:#7394fd;"></div>
<div style="left:673px;top:618px;width:63px;height:86px;background:#05c705;"></div>
<div style="left:736px;top:618px;width:142px;height:86px;background:#f07800;"></div>
<div style="left:878px;top:618px;width:189px;height:86px;background:#00b0f0;"></div>
<div style="left:1067px;top:618px;width:378px;height:86px;background:#7394fd;"></div>
<div style="left:1445px;top:618px;width:453px;height:86px;background:#00b050;"></div>
<div style="left:54px;top:661px;width:619px;height:1px;background:#000;"></div>
<div style="left:128px;top:661px;width:1px;height:44px;background:#000;"></div>
<div style="left:320px;top:661px;width:1px;height:44px;background:#000;"></div>
<div style="left:383px;top:661px;width:1px;height:44px;background:#000;"></div>
<div style="left:464px;top:661px;width:1px;height:44px;background:#000;"></div>
<div style="left:546px;top:661px;width:1px;height:44px;background:#000;"></div>
<div style="left:609px;top:661px;width:1px;height:44px;background:#000;"></div>
<div style="left:672px;top:661px;width:1px;height:44px;background:#000;"></div>
<div style="left:672px;top:618px;width:1px;height:43px;background:#5f86d9;"></div>
<div style="left:736px;top:646px;width:142px;height:1px;background:#000;"></div>
<div style="left:806px;top:618px;width:1px;height:87px;background:#000;"></div>
<div style="left:877px;top:618px;width:1px;height:87px;background:#000;"></div>
<div style="left:940px;top:618px;width:1px;height:87px;background:#000;"></div>
<div style="left:1003px;top:618px;width:1px;height:87px;background:#000;"></div>
<div style="left:1066px;top:618px;width:1px;height:87px;background:#000;"></div>
<div style="left:1129px;top:618px;width:1px;height:87px;background:#000;"></div>
<div style="left:1192px;top:618px;width:1px;height:87px;background:#000;"></div>
<div style="left:1255px;top:618px;width:1px;height:87px;background:#000;"></div>
<div style="left:1318px;top:618px;width:1px;height:87px;background:#000;"></div>
<div style="left:1381px;top:618px;width:1px;height:87px;background:#000;"></div>
<div style="left:1444px;top:618px;width:1px;height:87px;background:#000;"></div>
<div style="left:1507px;top:618px;width:1px;height:87px;background:#000;"></div>
<div style="left:1570px;top:618px;width:1px;height:87px;background:#000;"></div>
<div style="left:1633px;top:618px;width:1px;height:87px;background:#000;"></div>
<div style="left:1696px;top:618px;width:1px;height:87px;background:#000;"></div>
<div style="left:1759px;top:618px;width:1px;height:87px;background:#000;"></div>
<div style="left:1822px;top:618px;width:1px;height:87px;background:#000;"></div>
<div style="left:1885px;top:618px;width:1px;height:87px;background:#000;"></div>
<div style="left:54px;top:704px;width:1844px;height:1px;background:#000;"></div>
<div class="ch" style="left:54px;top:662px;width:74px;height:42px;justify-content:flex-end;padding-bottom:0px"><span>Код 1С</span></div>
<div class="ch" style="left:129px;top:662px;width:191px;height:42px;justify-content:flex-end;padding-bottom:0px"><span>Наименование по 1С</span></div>
<div class="ch" style="left:321px;top:662px;width:62px;height:42px;justify-content:flex-end;padding-bottom:0px"><span>Вес, кг</span></div>
<div class="ch" style="left:384px;top:662px;width:80px;height:42px;justify-content:flex-end;padding-bottom:0px"><span>Цена продажи</span></div>
<div class="ch" style="left:465px;top:662px;width:81px;height:42px;justify-content:flex-end;padding-bottom:0px"><span>Цена закупки</span></div>
<div class="ch" style="left:547px;top:662px;width:62px;height:42px;justify-content:flex-end;padding-bottom:0px"><span>Минималь</span><span>ная цена</span><span>продажи</span></div>
<div class="ch" style="left:610px;top:662px;width:62px;height:42px;justify-content:flex-end;padding-bottom:0px"><span>Минималь</span><span>ная цена</span><span>по прайсу</span></div>
<div class="ch" style="left:673px;top:618px;width:62px;height:86px;justify-content:flex-end;padding-bottom:0px"><span>Остатки</span><span>на</span><span>14.01.2020</span></div>
<div class="ch" style="left:736px;top:618px;width:70px;height:28px;justify-content:flex-end;padding-bottom:0px"><span>12/18</span></div>
<div class="ch" style="left:807px;top:618px;width:70px;height:28px;justify-content:flex-end;padding-bottom:0px"><span>Итого</span></div>
<div class="ch" style="left:736px;top:647px;width:70px;height:57px;justify-content:flex-end;padding-bottom:0px"><span>Заявка</span></div>
<div class="ch" style="left:807px;top:647px;width:70px;height:57px;justify-content:flex-end;padding-bottom:0px"><span>Заявка</span></div>
<div class="ch" style="left:878px;top:618px;width:62px;height:86px;justify-content:center;padding-bottom:0px"><span>Продажи</span><span>за 18</span><span>месяцев</span></div>
<div class="ch" style="left:941px;top:618px;width:62px;height:86px;justify-content:center;padding-bottom:0px"><span>Продажи</span><span>за 12</span><span>месяцев</span></div>
<div class="ch" style="left:1004px;top:618px;width:62px;height:86px;justify-content:center;padding-bottom:0px"><span>Продажи</span><span>за 6</span><span>месяцев</span></div>
<div class="ch" style="left:1067px;top:618px;width:62px;height:86px;justify-content:center;padding-bottom:0px"><span>Среднемес</span><span>ячные</span><span>продажи</span><span>за 18</span><span>месяцев</span></div>
<div class="ch" style="left:1130px;top:618px;width:62px;height:86px;justify-content:center;padding-bottom:0px"><span>Среднемес</span><span>ячные</span><span>продажи</span><span>за 12</span><span>месяцев</span></div>
<div class="ch" style="left:1193px;top:618px;width:62px;height:86px;justify-content:center;padding-bottom:0px"><span>Среднемес</span><span>ячные</span><span>продажи</span><span>за 6</span><span>месяцев</span></div>
<div class="ch" style="left:1256px;top:618px;width:62px;height:86px;justify-content:center;padding-bottom:0px"><span>Потребнос</span><span>ть на мес</span><span>фактическ</span><span>ая</span></div>
<div class="ch" style="left:1319px;top:618px;width:62px;height:86px;justify-content:center;padding-bottom:0px"><span>Потребнос</span><span>ть на мес</span><span>расчетная</span></div>
<div class="ch" style="left:1382px;top:618px;width:62px;height:86px;justify-content:center;padding-bottom:0px"><span>Минималь</span><span>ный</span><span>остато</span></div>
<div class="ch" style="left:1445px;top:618px;width:62px;height:86px;justify-content:flex-end;padding-bottom:0px"><span>31.01.20</span></div>
<div class="ch" style="left:1508px;top:618px;width:62px;height:86px;justify-content:flex-end;padding-bottom:0px"><span>29.02.20</span></div>
<div class="ch" style="left:1571px;top:618px;width:62px;height:86px;justify-content:flex-end;padding-bottom:0px"><span>31.03.20</span></div>
<div class="ch" style="left:1634px;top:618px;width:62px;height:86px;justify-content:flex-end;padding-bottom:0px"><span>30.04.20</span></div>
<div class="ch" style="left:1697px;top:618px;width:62px;height:86px;justify-content:flex-end;padding-bottom:0px"><span>31.05.20</span></div>
<div class="ch" style="left:1760px;top:618px;width:62px;height:86px;justify-content:flex-end;padding-bottom:0px"><span>30.06.20</span></div>
<div class="ch" style="left:1823px;top:618px;width:62px;height:86px;justify-content:flex-end;padding-bottom:0px"><span>31.07.20</span></div>
<div style="left:54px;top:853px;width:1391px;height:14px;background:#c4d79b;"></div>
<div style="left:1445px;top:853px;width:453px;height:14px;background:#cd5c5c;"></div>
<div style="left:54px;top:747px;width:1844px;height:1px;background:#000;"></div>
<div style="left:54px;top:762px;width:1844px;height:1px;background:#000;"></div>
<div style="left:54px;top:777px;width:1844px;height:1px;background:#000;"></div>
<div style="left:54px;top:792px;width:1844px;height:1px;background:#000;"></div>
<div style="left:54px;top:807px;width:1844px;height:1px;background:#000;"></div>
<div style="left:54px;top:822px;width:1844px;height:1px;background:#000;"></div>
<div style="left:54px;top:837px;width:1844px;height:1px;background:#000;"></div>
<div style="left:54px;top:852px;width:1844px;height:1px;background:#000;"></div>
<div style="left:54px;top:867px;width:1844px;height:1px;background:#000;"></div>
<div style="left:54px;top:882px;width:1844px;height:1px;background:#000;"></div>
<div style="left:54px;top:897px;width:1844px;height:1px;background:#000;"></div>
<div style="left:54px;top:912px;width:1844px;height:1px;background:#000;"></div>
<div style="left:54px;top:927px;width:1844px;height:1px;background:#000;"></div>
<div style="left:54px;top:942px;width:1844px;height:1px;background:#000;"></div>
<div style="left:54px;top:957px;width:1844px;height:1px;background:#000;"></div>
<div style="left:54px;top:972px;width:1844px;height:1px;background:#000;"></div>
<div style="left:54px;top:987px;width:1844px;height:1px;background:#000;"></div>
<div style="left:128px;top:705px;width:1px;height:298px;background:#000;"></div>
<div style="left:320px;top:705px;width:1px;height:298px;background:#000;"></div>
<div style="left:383px;top:705px;width:1px;height:298px;background:#000;"></div>
<div style="left:464px;top:705px;width:1px;height:298px;background:#000;"></div>
<div style="left:546px;top:705px;width:1px;height:298px;background:#000;"></div>
<div style="left:609px;top:705px;width:1px;height:298px;background:#000;"></div>
<div style="left:672px;top:705px;width:1px;height:298px;background:#000;"></div>
<div style="left:735px;top:705px;width:1px;height:298px;background:#b5ad8c;"></div>
<div style="left:806px;top:705px;width:1px;height:298px;background:#000;"></div>
<div style="left:877px;top:705px;width:1px;height:298px;background:#000;"></div>
<div style="left:940px;top:705px;width:1px;height:298px;background:#000;"></div>
<div style="left:1003px;top:705px;width:1px;height:298px;background:#000;"></div>
<div style="left:1066px;top:705px;width:1px;height:298px;background:#000;"></div>
<div style="left:1129px;top:705px;width:1px;height:298px;background:#000;"></div>
<div style="left:1192px;top:705px;width:1px;height:298px;background:#000;"></div>
<div style="left:1255px;top:705px;width:1px;height:298px;background:#000;"></div>
<div style="left:1318px;top:705px;width:1px;height:298px;background:#000;"></div>
<div style="left:1381px;top:705px;width:1px;height:298px;background:#000;"></div>
<div style="left:1444px;top:705px;width:1px;height:298px;background:#000;"></div>
<div style="left:1507px;top:705px;width:1px;height:298px;background:#000;"></div>
<div style="left:1570px;top:705px;width:1px;height:298px;background:#000;"></div>
<div style="left:1633px;top:705px;width:1px;height:298px;background:#000;"></div>
<div style="left:1696px;top:705px;width:1px;height:298px;background:#000;"></div>
<div style="left:1759px;top:705px;width:1px;height:298px;background:#000;"></div>
<div style="left:1822px;top:705px;width:1px;height:298px;background:#000;"></div>
<div style="left:1885px;top:705px;width:1px;height:298px;background:#000;"></div>
<div style="left:128px;top:853px;width:1px;height:14px;background:#c4d79b;"></div>
<div class="c" style="left:56.5px;top:733px;width:69.5px;height:14px;text-align:left;">00000000633</div>
<div class="c" style="left:323.5px;top:733px;width:57.5px;height:14px;text-align:right;">0,94</div>
<div class="c" style="left:612.5px;top:733px;width:57.5px;height:14px;text-align:right;">325,00</div>
<div class="c" style="left:56.5px;top:748px;width:69.5px;height:14px;text-align:left;">00000004676</div>
<div class="c" style="left:131.5px;top:748px;width:186.5px;height:14px;text-align:left;letter-spacing:0.16px;">ШСЛ60К (GI60ES) 39 кон</div>
<div class="c" style="left:323.5px;top:748px;width:57.5px;height:14px;text-align:right;">0,94</div>
<div class="c" style="left:612.5px;top:748px;width:57.5px;height:14px;text-align:right;">274,00</div>
<div class="c" style="left:56.5px;top:763px;width:69.5px;height:14px;text-align:left;">00000005471</div>
<div class="c" style="left:131.5px;top:763px;width:186.5px;height:14px;text-align:left;letter-spacing:0.16px;">ШСЛ60К (GI60ES) 50 кон</div>
<div class="c" style="left:323.5px;top:763px;width:57.5px;height:14px;text-align:right;">0,942</div>
<div class="c" style="left:612.5px;top:763px;width:57.5px;height:14px;text-align:right;">312,00</div>
<div class="c" style="left:56.5px;top:778px;width:69.5px;height:14px;text-align:left;">00000002517</div>
<div class="c" style="left:131.5px;top:778px;width:186.5px;height:14px;text-align:left;letter-spacing:0.16px;">ШСЛ60К (GI60ES) светлый</div>
<div class="c" style="left:323.5px;top:778px;width:57.5px;height:14px;text-align:right;">0,94</div>
<div class="c" style="left:612.5px;top:778px;width:57.5px;height:14px;text-align:right;">274,00</div>
<div class="c" style="left:56.5px;top:793px;width:69.5px;height:14px;text-align:left;">00000001217</div>
<div class="c" style="left:131.5px;top:793px;width:186.5px;height:14px;text-align:left;letter-spacing:0.16px;">ШСЛ60К (GI60ES) светлый</div>
<div class="c" style="left:323.5px;top:793px;width:57.5px;height:14px;text-align:right;">0,94</div>
<div class="c" style="left:56.5px;top:808px;width:69.5px;height:14px;text-align:left;">00000004001</div>
<div class="c" style="left:131.5px;top:808px;width:186.5px;height:14px;text-align:left;letter-spacing:0.16px;">ШСЛ60К (GI60ES) светлый</div>
<div class="c" style="left:323.5px;top:808px;width:57.5px;height:14px;text-align:right;">1,03</div>
<div class="c" style="left:612.5px;top:808px;width:57.5px;height:14px;text-align:right;">274,00</div>
<div class="c" style="left:56.5px;top:823px;width:69.5px;height:14px;text-align:left;">00000002769</div>
<div class="c" style="left:131.5px;top:823px;width:186.5px;height:14px;text-align:left;letter-spacing:0.16px;">ШСЛ60К (GI60ES) светлый</div>
<div class="c" style="left:323.5px;top:823px;width:57.5px;height:14px;text-align:right;">0,94</div>
<div class="c" style="left:56.5px;top:838px;width:69.5px;height:14px;text-align:left;">00000002405</div>
<div class="c" style="left:131.5px;top:838px;width:186.5px;height:14px;text-align:left;letter-spacing:0.16px;">ШСЛ60К (КПК)</div>
<div class="c" style="left:56.5px;top:868px;width:69.5px;height:14px;text-align:left;">00000004201</div>
<div class="c" style="left:131.5px;top:868px;width:186.5px;height:14px;text-align:left;letter-spacing:0.16px;">ШСЛ70</div>
<div class="c" style="left:323.5px;top:868px;width:57.5px;height:14px;text-align:right;">1,56</div>
<div class="c" style="left:56.5px;top:883px;width:69.5px;height:14px;text-align:left;">00000001033</div>
<div class="c" style="left:131.5px;top:883px;width:186.5px;height:14px;text-align:left;letter-spacing:0.16px;">ШСЛ70</div>
<div class="c" style="left:323.5px;top:883px;width:57.5px;height:14px;text-align:right;">1,56</div>
<div class="c" style="left:612.5px;top:883px;width:57.5px;height:14px;text-align:right;">461,44</div>
<div class="c" style="left:56.5px;top:898px;width:69.5px;height:14px;text-align:left;">00000015696</div>
<div class="c" style="left:131.5px;top:898px;width:186.5px;height:14px;text-align:left;letter-spacing:0.16px;">ШСЛ70</div>
<div class="c" style="left:56.5px;top:913px;width:69.5px;height:14px;text-align:left;">00000013919</div>
<div class="c" style="left:131.5px;top:913px;width:186.5px;height:14px;text-align:left;letter-spacing:0.16px;">ШСЛ70К</div>
<div class="c" style="left:323.5px;top:913px;width:57.5px;height:14px;text-align:right;">1,56</div>
<div class="c" style="left:612.5px;top:913px;width:57.5px;height:14px;text-align:right;">624,00</div>
<div class="c" style="left:56.5px;top:928px;width:69.5px;height:14px;text-align:left;">00000006910</div>
<div class="c" style="left:131.5px;top:928px;width:186.5px;height:14px;text-align:left;letter-spacing:0.16px;">ШСЛ70К</div>
<div class="c" style="left:323.5px;top:928px;width:57.5px;height:14px;text-align:right;">1</div>
<div class="c" style="left:612.5px;top:928px;width:57.5px;height:14px;text-align:right;">487,00</div>
<div class="c" style="left:56.5px;top:943px;width:69.5px;height:14px;text-align:left;">00000012656</div>
<div class="c" style="left:131.5px;top:943px;width:186.5px;height:14px;text-align:left;letter-spacing:0.16px;">ШСЛ70К</div>
<div class="c" style="left:323.5px;top:943px;width:57.5px;height:14px;text-align:right;">1,56</div>
<div class="c" style="left:612.5px;top:943px;width:57.5px;height:14px;text-align:right;">504,00</div>
<div class="c" style="left:56.5px;top:958px;width:69.5px;height:14px;text-align:left;">00000012795</div>
<div class="c" style="left:131.5px;top:958px;width:186.5px;height:14px;text-align:left;letter-spacing:0.16px;">ШСЛ70К</div>
<div class="c" style="left:323.5px;top:958px;width:57.5px;height:14px;text-align:right;">1,56</div>
<div class="c" style="left:612.5px;top:958px;width:57.5px;height:14px;text-align:right;">528,00</div>
<div class="c" style="left:56.5px;top:973px;width:69.5px;height:14px;text-align:left;">00000013109</div>
<div class="c" style="left:131.5px;top:973px;width:186.5px;height:14px;text-align:left;letter-spacing:0.16px;">ШСЛ70К</div>
<div class="c" style="left:323.5px;top:973px;width:57.5px;height:14px;text-align:right;">3</div>
<div class="c" style="left:612.5px;top:973px;width:57.5px;height:14px;text-align:right;">615,00</div>
<div class="c" style="left:56.5px;top:988px;width:69.5px;height:14px;text-align:left;">00000012992</div>
<div class="c" style="left:131.5px;top:988px;width:186.5px;height:14px;text-align:left;letter-spacing:0.16px;">ШСЛ70К</div>
<div class="c" style="left:323.5px;top:988px;width:57.5px;height:14px;text-align:right;">1,56</div>
<div class="c" style="left:612.5px;top:988px;width:57.5px;height:14px;text-align:right;">564,00</div>
<div class="c" style="left:131.5px;top:705px;width:188px;height:42px;white-space:pre;letter-spacing:.16px">ШСЛ60К (GI60ES)  в этом<br>количестве 900 шт подшипники<br>WHX</div>
<div class="c" style="left:675.5px;top:898px;width:57.5px;height:14px;text-align:right;">7</div>
<div class="c" style="left:675.5px;top:973px;width:57.5px;height:14px;text-align:right;">10</div>
<div class="c" style="left:880.5px;top:928px;width:57.5px;height:14px;text-align:right;">4</div>
<div class="c" style="left:57px;top:853px;width:260px;height:14px;text-align:right;font-weight:bold">ШСЛ60К (GI60ES)</div>
<div class="c" style="left:323.5px;top:853px;width:57.5px;height:14px;text-align:right;font-weight:bold;">1,1</div>
<div class="c" style="left:549.5px;top:853px;width:57.5px;height:14px;text-align:right;font-weight:bold;">262,71</div>
<div class="c" style="left:612.5px;top:853px;width:57.5px;height:14px;text-align:right;font-weight:bold;">274,00</div>
<div class="c" style="left:675.5px;top:853px;width:57.5px;height:14px;text-align:right;font-weight:bold;">162</div>
<div class="c" style="left:738.5px;top:853px;width:65.5px;height:14px;text-align:right;font-weight:bold;">1 494</div>
<div class="c" style="left:809.5px;top:853px;width:65.5px;height:14px;text-align:right;font-weight:bold;">26 963</div>
<div class="c" style="left:880.5px;top:853px;width:57.5px;height:14px;text-align:right;font-weight:bold;">11 266</div>
<div class="c" style="left:943.5px;top:853px;width:57.5px;height:14px;text-align:right;font-weight:bold;">680</div>
<div class="c" style="left:1069.5px;top:853px;width:57.5px;height:14px;text-align:right;font-weight:bold;">626</div>
<div class="c" style="left:1132.5px;top:853px;width:57.5px;height:14px;text-align:right;font-weight:bold;">57</div>
<div class="c" style="left:1321.5px;top:853px;width:57.5px;height:14px;text-align:right;font-weight:bold;">1 650</div>
<div class="c" style="left:1384.5px;top:853px;width:57.5px;height:14px;text-align:right;font-weight:bold;">2 500</div>
<div style="left:19px;top:1002px;width:1879px;height:17px;background:#fcfaf2;border-bottom:1px solid #b9b08c;"></div>
<div style="left:19px;top:1002px;width:20px;height:16px;background:linear-gradient(90deg,#fbf8ea,#efebd2);border-right:1px solid #d8d1b6;"></div>
<svg style="left:25px;top:1006px" width="7" height="8" viewBox="0 0 7 8"><path d="M7 0L0 4l7 4z" fill="#9a9a9a"/></svg>
<div style="left:1880px;top:1002px;width:17px;height:16px;background:linear-gradient(90deg,#fbf8ea,#efebd2);border-left:1px solid #d8d1b6;"></div>
<svg style="left:1886px;top:1006px" width="7" height="8" viewBox="0 0 7 8"><path d="M0 0l7 4-7 4z" fill="#9a9a9a"/></svg>
<div style="left:893px;top:1002px;width:454px;height:16px;background:linear-gradient(180deg,#f7f3dc,#efe9c8);border:1px solid #d8d1b6;border-top:none;"></div>
<div style="left:1116px;top:1010px;width:4px;height:3px;border:1px solid #c8c0a0;border-radius:2px;"></div>
<div style="left:0px;top:1044px;width:1920px;height:6px;background:linear-gradient(180deg,#1c1c1c 0%,#5c5c5c 20%,#747474 70%,#4a4a4a 100%);"></div>
<div style="left:362px;top:1045px;width:70px;height:4px;background:#15171a;"></div>
<div style="left:0px;top:1050px;width:1920px;height:30px;background:linear-gradient(90deg,#8598b2 0px,#8598b2 68px,#a8c0dd 76px,#b2c9e5 700px,#adc5e2 1300px,#a3bbd8 1470px,#8598b2 1535px,#8599b3 1920px);"></div>
<div style="left:0px;top:1050px;width:1920px;height:1px;background:rgba(255,255,255,.30);"></div>
<div style="left:0px;top:1051px;width:1920px;height:29px;background:linear-gradient(180deg,rgba(255,255,255,.10),rgba(255,255,255,0) 50%,rgba(30,60,100,.06));"></div>
<svg style="left:8px;top:1044px" width="38" height="36" viewBox="0 0 38 36">
<defs><radialGradient id="orb" cx="50%" cy="100%" r="95%"><stop offset="0" stop-color="#12e4ff"/><stop offset=".35" stop-color="#0a86c8"/><stop offset=".7" stop-color="#2a6296"/><stop offset="1" stop-color="#7a98b8"/></radialGradient>
<linearGradient id="orbh" x1="0" y1="0" x2="0" y2="1"><stop offset="0" stop-color="#fff" stop-opacity=".55"/><stop offset="1" stop-color="#fff" stop-opacity=".05"/></linearGradient></defs>
<circle cx="19" cy="19.500" r="17.700" fill="url(#orb)" stroke="#0e4a84" stroke-width="1.200"/>
<path d="M2.500 17a16.500 16.500 0 0 1 33 0c-8 4-25 4-33 0z" fill="url(#orbh)"/>
<g transform="translate(19 18.500) scale(1.180) translate(-18.500 -17.500)"><path d="M11 9.500c2.800-1.600 5.200-1.600 8-.2l-1.800 7.200c-2.800-1.400-5.200-1.300-8 .2z" fill="#f0602a"/>
<path d="M20.200 9.800c2.800 1.300 5.200 1.300 8-.4l-1.800 7.400c-2.800 1.700-5.200 1.700-8 .4z" fill="#8cc63c"/>
<path d="M8.800 18c2.800-1.500 5.200-1.600 8-.2l-1.800 7.200c-2.800-1.400-5.200-1.300-8 .2z" fill="#2a8ee0"/>
<path d="M18 18.300c2.800 1.300 5.200 1.300 8-.4l-1.800 7.400c-2.800 1.700-5.200 1.700-8 .4z" fill="#fcb82c"/></g>
</svg>
<div style="left:58px;top:1055px;width:2px;height:2px;background:#2c3a4c;"></div>
<div style="left:59px;top:1056px;width:1px;height:1px;background:#c4d0de;"></div>
<div style="left:62px;top:1055px;width:2px;height:2px;background:#2c3a4c;"></div>
<div style="left:63px;top:1056px;width:1px;height:1px;background:#c4d0de;"></div>
<div style="left:66px;top:1055px;width:2px;height:2px;background:#2c3a4c;"></div>
<div style="left:67px;top:1056px;width:1px;height:1px;background:#c4d0de;"></div>
<div style="left:58px;top:1059px;width:2px;height:2px;background:#2c3a4c;"></div>
<div style="left:59px;top:1060px;width:1px;height:1px;background:#c4d0de;"></div>
<div style="left:62px;top:1059px;width:2px;height:2px;background:#2c3a4c;"></div>
<div style="left:63px;top:1060px;width:1px;height:1px;background:#c4d0de;"></div>
<div style="left:66px;top:1059px;width:2px;height:2px;background:#2c3a4c;"></div>
<div style="left:67px;top:1060px;width:1px;height:1px;background:#c4d0de;"></div>
<div style="left:58px;top:1063px;width:2px;height:2px;background:#2c3a4c;"></div>
<div style="left:59px;top:1064px;width:1px;height:1px;background:#c4d0de;"></div>
<div style="left:62px;top:1063px;width:2px;height:2px;background:#2c3a4c;"></div>
<div style="left:63px;top:1064px;width:1px;height:1px;background:#c4d0de;"></div>
<div style="left:66px;top:1063px;width:2px;height:2px;background:#2c3a4c;"></div>
<div style="left:67px;top:1064px;width:1px;height:1px;background:#c4d0de;"></div>
<div style="left:58px;top:1067px;width:2px;height:2px;background:#2c3a4c;"></div>
<div style="left:59px;top:1068px;width:1px;height:1px;background:#c4d0de;"></div>
<div style="left:62px;top:1067px;width:2px;height:2px;background:#2c3a4c;"></div>
<div style="left:63px;top:1068px;width:1px;height:1px;background:#c4d0de;"></div>
<div style="left:66px;top:1067px;width:2px;height:2px;background:#2c3a4c;"></div>
<div style="left:67px;top:1068px;width:1px;height:1px;background:#c4d0de;"></div>
<div style="left:58px;top:1071px;width:2px;height:2px;background:#2c3a4c;"></div>
<div style="left:59px;top:1072px;width:1px;height:1px;background:#c4d0de;"></div>
<div style="left:62px;top:1071px;width:2px;height:2px;background:#2c3a4c;"></div>
<div style="left:63px;top:1072px;width:1px;height:1px;background:#c4d0de;"></div>
<div style="left:66px;top:1071px;width:2px;height:2px;background:#2c3a4c;"></div>
<div style="left:67px;top:1072px;width:1px;height:1px;background:#c4d0de;"></div>
<div style="left:58px;top:1075px;width:2px;height:2px;background:#2c3a4c;"></div>
<div style="left:59px;top:1076px;width:1px;height:1px;background:#c4d0de;"></div>
<div style="left:62px;top:1075px;width:2px;height:2px;background:#2c3a4c;"></div>
<div style="left:63px;top:1076px;width:1px;height:1px;background:#c4d0de;"></div>
<div style="left:66px;top:1075px;width:2px;height:2px;background:#2c3a4c;"></div>
<div style="left:67px;top:1076px;width:1px;height:1px;background:#c4d0de;"></div>
<div style="left:110px;top:1051px;width:10px;height:31px;background:linear-gradient(180deg,#cfdeef,#b9cde6);border:1px solid #7187a6;border-radius:3px;box-shadow:inset 0 0 0 1px rgba(255,255,255,.5);"></div>
<div style="left:106px;top:1051px;width:9px;height:31px;background:linear-gradient(180deg,#cfdeef,#b9cde6);border:1px solid #7187a6;border-radius:3px;box-shadow:inset 0 0 0 1px rgba(255,255,255,.5);"></div>
<div style="left:76px;top:1051px;width:35px;height:31px;background:linear-gradient(180deg,#cfdeef 0%,#c1d3e9 48%,#b4c9e3 52%,#c3d5ea 100%);border:1px solid #7187a6;border-radius:3px;box-shadow:inset 0 0 0 1px rgba(255,255,255,.55);"></div>
<div style="left:156px;top:1051px;width:10px;height:31px;background:linear-gradient(180deg,#cfdeef,#b9cde6);border:1px solid #7187a6;border-radius:3px;box-shadow:inset 0 0 0 1px rgba(255,255,255,.5);"></div>
<div style="left:152px;top:1051px;width:9px;height:31px;background:linear-gradient(180deg,#cfdeef,#b9cde6);border:1px solid #7187a6;border-radius:3px;box-shadow:inset 0 0 0 1px rgba(255,255,255,.5);"></div>
<div style="left:122px;top:1051px;width:35px;height:31px;background:linear-gradient(180deg,#cfdeef 0%,#c1d3e9 48%,#b4c9e3 52%,#c3d5ea 100%);border:1px solid #7187a6;border-radius:3px;box-shadow:inset 0 0 0 1px rgba(255,255,255,.55);"></div>
<div style="left:168px;top:1051px;width:43px;height:31px;background:linear-gradient(180deg,#cfdeef 0%,#c1d3e9 48%,#b4c9e3 52%,#c3d5ea 100%);border:1px solid #7187a6;border-radius:3px;box-shadow:inset 0 0 0 1px rgba(255,255,255,.55);"></div>
<div style="left:247px;top:1051px;width:9px;height:31px;background:linear-gradient(180deg,#cfdeef,#b9cde6);border:1px solid #7187a6;border-radius:3px;box-shadow:inset 0 0 0 1px rgba(255,255,255,.5);"></div>
<div style="left:214px;top:1051px;width:38px;height:31px;background:linear-gradient(180deg,#cfdeef 0%,#c1d3e9 48%,#b4c9e3 52%,#c3d5ea 100%);border:1px solid #7187a6;border-radius:3px;box-shadow:inset 0 0 0 1px rgba(255,255,255,.55);"></div>
<div style="left:306px;top:1051px;width:43px;height:31px;background:linear-gradient(180deg,#cfdeef 0%,#c1d3e9 48%,#b4c9e3 52%,#c3d5ea 100%);border:1px solid #7187a6;border-radius:3px;box-shadow:inset 0 0 0 1px rgba(255,255,255,.55);"></div>
<div style="left:352px;top:1051px;width:43px;height:31px;background:linear-gradient(180deg,#dbe7f4 0%,#cbdbee 48%,#bdd0e8 52%,#cddcf0 100%);border:1px solid #6f86a4;border-radius:3px;box-shadow:inset 0 0 0 1px rgba(255,255,255,.55);"></div>
<div style="left:398px;top:1051px;width:43px;height:31px;background:linear-gradient(180deg,#cfdeef 0%,#c1d3e9 48%,#b4c9e3 52%,#c3d5ea 100%);border:1px solid #7187a6;border-radius:3px;box-shadow:inset 0 0 0 1px rgba(255,255,255,.55);"></div>
<div style="left:444px;top:1051px;width:42px;height:31px;background:linear-gradient(180deg,#cfdeef 0%,#c1d3e9 48%,#b4c9e3 52%,#c3d5ea 100%);border:1px solid #7187a6;border-radius:3px;box-shadow:inset 0 0 0 1px rgba(255,255,255,.55);"></div>
<div style="left:523px;top:1051px;width:10px;height:31px;background:linear-gradient(180deg,#cfdeef,#b9cde6);border:1px solid #7187a6;border-radius:3px;box-shadow:inset 0 0 0 1px rgba(255,255,255,.5);"></div>
<div style="left:490px;top:1051px;width:38px;height:31px;background:linear-gradient(180deg,#cfdeef 0%,#c1d3e9 48%,#b4c9e3 52%,#c3d5ea 100%);border:1px solid #7187a6;border-radius:3px;box-shadow:inset 0 0 0 1px rgba(255,255,255,.55);"></div>
<div style="left:535px;top:1051px;width:44px;height:31px;background:linear-gradient(180deg,#fbe7a0 0%,#f8cc62 45%,#f1a540 55%,#f6b95a 100%);border:1px solid #9a7a3a;border-radius:3px;box-shadow:inset 0 0 0 1px rgba(255,255,255,.55);"></div>
<div style="left:582px;top:1051px;width:43px;height:31px;background:linear-gradient(180deg,#cfdeef 0%,#c1d3e9 48%,#b4c9e3 52%,#c3d5ea 100%);border:1px solid #7187a6;border-radius:3px;box-shadow:inset 0 0 0 1px rgba(255,255,255,.55);"></div>
<div style="left:628px;top:1051px;width:43px;height:31px;background:linear-gradient(180deg,#cfdeef 0%,#c1d3e9 48%,#b4c9e3 52%,#c3d5ea 100%);border:1px solid #7187a6;border-radius:3px;box-shadow:inset 0 0 0 1px rgba(255,255,255,.55);"></div>
<svg style="left:85px;top:1058px" width="18" height="16" viewBox="0 0 18 16"><path d="M0 2h6l1.500 2h9.500v11h-17z" fill="#f4d26a" stroke="#c9a23a" stroke-width=".8"/><path d="M0 6h17v9h-17z" fill="#f9e08f"/><path d="M5 9h8v6h-8z" fill="#4aa8e8"/><path d="M7 12h4v3h-4z" fill="#fff"/></svg>
<svg style="left:131px;top:1057px" width="17" height="18" viewBox="0 0 17 18"><path d="M.5 .5h16v17h-16z" fill="#e9f3e6" stroke="#2a7a2a"/><path d="M3.500 3.500l9.500 11M13 3.500l-9.500 11" stroke="#1e8a2e" stroke-width="3"/><path d="M10 2h5v14" fill="none" stroke="#b8d8b8" stroke-width="1"/></svg>
<svg style="left:181px;top:1058px" width="17" height="17" viewBox="0 0 17 17"><circle cx="8.500" cy="8.500" r="8.200" fill="#e8e8e8"/><path d="M8.500 8.500L1.400 4.400A8.200 8.200 0 0 1 15.600 4.400z" fill="#dd4b3e"/><path d="M8.500 8.500L15.600 4.400A8.200 8.200 0 0 1 8.500 16.700z" fill="#f6c92a"/><path d="M8.500 8.500L8.500 16.700A8.200 8.200 0 0 1 1.400 4.400z" fill="#1fa05a"/><circle cx="8.500" cy="8.500" r="3.800" fill="#fff"/><circle cx="8.500" cy="8.500" r="3" fill="#4a8af0"/></svg>
<svg style="left:224px;top:1057px" width="17" height="18" viewBox="0 0 17 18"><path d="M.5 .5h16v17h-16z" fill="#eaf0fb" stroke="#2a56b8"/><text x="2" y="14" font-family="Liberation Serif,serif" font-weight="bold" font-size="14" fill="#1c46b0" textLength="13" lengthAdjust="spacingAndGlyphs">W</text></svg>
<svg style="left:272px;top:1058px" width="20" height="17" viewBox="0 0 20 17"><path d="M0 0h13l6.500 8.500-6.500 8.500h-13z" fill="#f4f4f4" stroke="#c8c8c8" stroke-width=".7"/><text x="3.500" y="13.500" font-family="Liberation Sans,sans-serif" font-weight="bold" font-size="13" fill="#e0201c">Я</text></svg>
<svg style="left:318px;top:1057px" width="18" height="18" viewBox="0 0 18 18"><path d="M.5 .5h17v17h-17z" fill="#f4b62a" stroke="#c8860a"/><path d="M2.500 2.500h13v13h-13z" fill="none" stroke="#fbd878" stroke-width="1"/><text x="3.500" y="14" font-family="Liberation Sans,sans-serif" font-weight="bold" font-size="14" fill="#fff" stroke="#d8820a" stroke-width=".5">O</text></svg>
<svg style="left:365px;top:1057px" width="18" height="19" viewBox="0 0 18 19"><rect x=".5" y=".5" width="13" height="10" fill="#d7d5cc" stroke="#a9a79d"/><rect x="2" y="2" width="10" height="7" fill="#1434c8"/><rect x="7" y="2" width="5" height="4" fill="#7aa0ee"/><rect x="3" y="12" width="7" height="1.500" fill="#b8b6ad"/><circle cx="12.500" cy="13" r="4.800" fill="#f4f4f4" stroke="#7d7d7d"/><path d="M9.600 11.400l2 1.600-2 1.600M15.400 11.400l-2 1.600 2 1.600" stroke="#1f9a1f" stroke-width="1.300" fill="none"/></svg>
<svg style="left:411px;top:1057px" width="18" height="18" viewBox="0 0 18 18"><circle cx="8.500" cy="8.500" r="6" fill="#6a6a6a" stroke="#2a2a2a" stroke-width="3" stroke-dasharray="2.400 2.300"/><circle cx="8.500" cy="8.500" r="5.500" fill="#8a8a8a" stroke="#2a2a2a"/><circle cx="8.500" cy="8.500" r="2.200" fill="#d8d8d8" stroke="#2a2a2a" stroke-width=".8"/><path d="M10 10h3.500v-0l3.500 0v5c-1.500 2-3.500 2.500-3.500 2.500s-3.500-.5-3.500-2.500z" fill="#2a6ad8"/><path d="M13.500 10h3.500v3.500h-3.500z" fill="#f4c62a"/><path d="M10 13.500h3.500v4c-2-.5-3.500-1.500-3.500-2.500z" fill="#f4c62a"/></svg>
<svg style="left:457px;top:1057px" width="17" height="17" viewBox="0 0 17 17"><rect width="17" height="17" rx="1.500" fill="#0e6fd8"/><circle cx="8.500" cy="8.500" r="6.500" fill="#fff"/><path d="M2.800 8.500l3.400-2.600v1.700h4.600v-1.700l3.400 2.600-3.400 2.600v-1.700h-4.600v1.700z" fill="#0e6fd8"/></svg>
<svg style="left:502px;top:1056px" width="16" height="19" viewBox="0 0 16 19"><path d="M1 2.500h13l-.5 14.500h-12z" fill="#bfe0ef" stroke="#7aa6be" stroke-width=".8"/><path d="M14 4l1.500 .5-.5 13-1.500-.5z" fill="#e8dca8"/><path d="M2.500 5.500h10M2.500 7.500h10M2.500 9.500h10M2.500 11.500h10M2.500 13.500h10" stroke="#8ab8d0" stroke-width=".7"/><path d="M2 1v3M4 1v3M6 1v3M8 1v3M10 1v3M12 1v3" stroke="#4a4a4a" stroke-width=".9"/></svg>
<svg style="left:548px;top:1057px" width="18" height="18" viewBox="0 0 18 18"><path d="M9 1c4.500 0 8 3 8 7.500 0 2-.8 3.600-1.500 4.500-1 2.500-3.500 4.500-7 4.500-4 0-7.500-3-7.500-7.500 0-1.500.5-3 1-4 1-3 3.500-5 7-5z" fill="#16a5ea"/><text x="5.300" y="13.500" font-family="Liberation Sans,sans-serif" font-weight="bold" font-size="12.500" fill="#fff">S</text></svg>
<svg style="left:594px;top:1057px" width="20" height="19" viewBox="0 0 20 19"><circle cx="10.500" cy="9.500" r="7.500" fill="#d8d8e0" stroke="#2a2a3a" stroke-width="2.200" stroke-dasharray="1.600 1.200"/><path d="M1 2l3 10 3-8 3 8 3-10" fill="none" stroke="#2038b8" stroke-width="1.800"/><path d="M9 17l2-7 2.500 5 2.500-5 2 7" fill="none" stroke="#e01820" stroke-width="1.800"/></svg>
<svg style="left:639px;top:1059px" width="22" height="16" viewBox="0 0 22 16"><path d="M3 3l5 4-5 1z" fill="#0e50c8"/><ellipse cx="11.500" cy="8.500" rx="10.500" ry="5.500" transform="rotate(-24 11.500 8.500)" fill="#1a7af0"/><ellipse cx="12" cy="8.800" rx="5.500" ry="2.600" transform="rotate(-24 12 8.800)" fill="#fff"/></svg>
<div style="left:1542px;top:1055px;width:2px;height:2px;background:#35465c;"></div>
<div style="left:1543px;top:1056px;width:1px;height:1px;background:#cfdcec;"></div>
<div style="left:1545px;top:1055px;width:2px;height:2px;background:#35465c;"></div>
<div style="left:1546px;top:1056px;width:1px;height:1px;background:#cfdcec;"></div>
<div style="left:1548px;top:1055px;width:2px;height:2px;background:#35465c;"></div>
<div style="left:1549px;top:1056px;width:1px;height:1px;background:#cfdcec;"></div>
<div style="left:1542px;top:1059px;width:2px;height:2px;background:#35465c;"></div>
<div style="left:1543px;top:1060px;width:1px;height:1px;background:#cfdcec;"></div>
<div style="left:1545px;top:1059px;width:2px;height:2px;background:#35465c;"></div>
<div style="left:1546px;top:1060px;width:1px;height:1px;background:#cfdcec;"></div>
<div style="left:1548px;top:1059px;width:2px;height:2px;background:#35465c;"></div>
<div style="left:1549px;top:1060px;width:1px;height:1px;background:#cfdcec;"></div>
<div style="left:1542px;top:1063px;width:2px;height:2px;background:#35465c;"></div>
<div style="left:1543px;top:1064px;width:1px;height:1px;background:#cfdcec;"></div>
<div style="left:1545px;top:1063px;width:2px;height:2px;background:#35465c;"></div>
<div style="left:1546px;top:1064px;width:1px;height:1px;background:#cfdcec;"></div>
<div style="left:1548px;top:1063px;width:2px;height:2px;background:#35465c;"></div>
<div style="left:1549px;top:1064px;width:1px;height:1px;background:#cfdcec;"></div>
<div style="left:1542px;top:1067px;width:2px;height:2px;background:#35465c;"></div>
<div style="left:1543px;top:1068px;width:1px;height:1px;background:#cfdcec;"></div>
<div style="left:1545px;top:1067px;width:2px;height:2px;background:#35465c;"></div>
<div style="left:1546px;top:1068px;width:1px;height:1px;background:#cfdcec;"></div>
<div style="left:1548px;top:1067px;width:2px;height:2px;background:#35465c;"></div>
<div style="left:1549px;top:1068px;width:1px;height:1px;background:#cfdcec;"></div>
<div style="left:1542px;top:1071px;width:2px;height:2px;background:#35465c;"></div>
<div style="left:1543px;top:1072px;width:1px;height:1px;background:#cfdcec;"></div>
<div style="left:1545px;top:1071px;width:2px;height:2px;background:#35465c;"></div>
<div style="left:1546px;top:1072px;width:1px;height:1px;background:#cfdcec;"></div>
<div style="left:1548px;top:1071px;width:2px;height:2px;background:#35465c;"></div>
<div style="left:1549px;top:1072px;width:1px;height:1px;background:#cfdcec;"></div>
<div style="left:1542px;top:1075px;width:2px;height:2px;background:#35465c;"></div>
<div style="left:1543px;top:1076px;width:1px;height:1px;background:#cfdcec;"></div>
<div style="left:1545px;top:1075px;width:2px;height:2px;background:#35465c;"></div>
<div style="left:1546px;top:1076px;width:1px;height:1px;background:#cfdcec;"></div>
<div style="left:1548px;top:1075px;width:2px;height:2px;background:#35465c;"></div>
<div style="left:1549px;top:1076px;width:1px;height:1px;background:#cfdcec;"></div>
<div class="t" style="left:1559px;top:1055px;height:16px;line-height:16px;font-size:12px;color:#eef3f9;letter-spacing:-0.666px;">RU</div>
<svg style="left:1589px;top:1058px" width="17" height="16" viewBox="0 0 17 16"><ellipse cx="8.500" cy="8" rx="8" ry="4.600" transform="rotate(-24 8.500 8)" fill="#f4f4f4" stroke="#4a5a6a" stroke-width="1"/><ellipse cx="9" cy="8.500" rx="4.500" ry="2" transform="rotate(-24 9 8.500)" fill="#8ea2b8"/></svg>
<svg style="left:1614px;top:1058px" width="16" height="16" viewBox="0 0 16 16"><rect width="16" height="16" fill="#fff"/><rect width="16" height="4" fill="#f02020"/><path d="M1 2h2M5 2h2M9 2h2M13 2h2" stroke="#20e020" stroke-width="2"/><rect y="4" width="3" height="3" fill="#20d0f0"/><rect x="12" y="4" width="4" height="3" fill="#20d0f0"/><rect x="3" y="6" width="7" height="10" fill="#2a2a2a"/><rect x="4.500" y="8" width="4" height="8" fill="#f4f4f4"/><rect x="11" y="9" width="3" height="4" fill="#f0e020"/><rect x="0" y="8" width="2" height="8" fill="#f0a0c0"/></svg>
<svg style="left:1638px;top:1057px" width="17" height="17" viewBox="0 0 17 17"><path d="M1 7l5-3h3v-3h5v2.500h-3.500v1.500h5v11.500h-14.500z" fill="#1aa83a"/><path d="M5 11.500l2.500 2.500 4.500-5.500" fill="none" stroke="#fff" stroke-width="2"/></svg>
<svg style="left:1662px;top:1058px" width="17" height="16" viewBox="0 0 17 16"><path d="M1 5.500h3l4-4v13l-4-4h-3z" fill="#f4f4f4" stroke="#5a6a7a" stroke-width=".9"/><path d="M10 5c1.500 1.500 1.500 4.500 0 6M12.500 3c2.500 2.500 2.500 7.500 0 10" fill="none" stroke="#f4f4f4" stroke-width="1.300"/></svg>
<svg style="left:1686px;top:1058px" width="17" height="17" viewBox="0 0 17 17"><path d="M5 3h11v9.500h-11z" fill="#8a98a8" stroke="#f4f4f4" stroke-width="1.300"/><path d="M8 15.500h5M10.500 12.500v3" stroke="#f4f4f4" stroke-width="1.300"/><path d="M1 1v4h4v-4M3 5v9h3" fill="none" stroke="#f4f4f4" stroke-width="1.300"/></svg>
<svg style="left:1710px;top:1058px" width="16" height="16" viewBox="0 0 16 16"><rect width="16" height="16" rx="1.500" fill="#0e6fd8"/><circle cx="8" cy="8" r="6" fill="#fff"/><path d="M2.600 8l3.200-2.500v1.600h4.400v-1.600l3.200 2.500-3.200 2.500v-1.600h-4.400v1.600z" fill="#0e6fd8"/></svg>
<svg style="left:1734px;top:1058px" width="17" height="17" viewBox="0 0 17 17"><path d="M1 2c4-2 10-2 14 1 0 6-2 10-7 12.500-5-2.500-7-7.500-7-13.500z" fill="#4aa828"/><path d="M4 8l2.500 2.500 4-5" fill="none" stroke="#fff" stroke-width="1.800"/><circle cx="12.500" cy="12.500" r="3.200" fill="#e81820" stroke="#fff" stroke-width=".9"/></svg>
<svg style="left:1758px;top:1058px" width="17" height="17" viewBox="0 0 17 17"><path d="M2 1v15" stroke="#f4f4f4" stroke-width="1.600"/><path d="M3 2c3-1.500 5 1.500 9 0v7c-4 1.500-6-1.500-9 0z" fill="#f4f4f4" stroke="#6a7a8a" stroke-width=".6"/><circle cx="11.500" cy="11.500" r="4.300" fill="#e02020" stroke="#fff" stroke-width=".8"/><path d="M9.800 9.800l3.400 3.400M13.200 9.800l-3.400 3.400" stroke="#fff" stroke-width="1.500"/></svg>
<svg style="left:1782px;top:1057px" width="17" height="17" viewBox="0 0 17 17"><path d="M.5 .5h16v16h-16z" fill="#f4b62a" stroke="#fff3c0"/><text x="3.300" y="13.300" font-family="Liberation Sans,sans-serif" font-weight="bold" font-size="13" fill="#fff" stroke="#d8820a" stroke-width=".5">O</text></svg>
<svg style="left:1807px;top:1060px" width="15" height="11" viewBox="0 0 15 11"><path d="M.5 .5h14v10h-14z" fill="#fbe27a" stroke="#c8a030"/><path d="M.5 .5l7 5.500 7-5.500M.5 10.500l5-5M14.500 10.500l-5-5" fill="none" stroke="#c8a030" stroke-width=".9"/></svg>
<div class="t" style="left:1853px;top:1058px;height:16px;line-height:16px;font-size:12px;color:#fff;letter-spacing:-0.406px;">14:49</div>
<div style="left:1906px;top:1051px;width:15px;height:30px;background:linear-gradient(90deg,rgba(255,255,255,.35),rgba(255,255,255,.12));border:1px solid #5f7896;border-radius:2px 0 0 0;box-shadow:inset 1px 1px 0 rgba(255,255,255,.5);"></div>
<div style="left:1897px;top:32px;width:18px;height:989px;background:linear-gradient(90deg,#e3e3e3,#f3f3f3 40%,#f0f0f0);border-left:1px solid #dedede;"></div>
<svg style="left:1902px;top:37px" width="9" height="6" viewBox="0 0 9 6"><path d="M0 5.500L4.500 .5 9 5.500z" fill="#4d4d4d"/></svg>
<div style="left:1898px;top:50px;width:15px;height:871px;border:1px solid #979797;border-radius:2px;background:linear-gradient(90deg,#f4f4f4 0%,#e6e6e8 45%,#cfcfd4 55%,#dadade 100%);"></div>
<div style="left:1902px;top:481px;width:9px;height:1px;background:#7a7a7a;"></div>
<div style="left:1902px;top:482px;width:9px;height:1px;background:#fdfdfd;"></div>
<div style="left:1902px;top:484px;width:9px;height:1px;background:#7a7a7a;"></div>
<div style="left:1902px;top:485px;width:9px;height:1px;background:#fdfdfd;"></div>
<div style="left:1902px;top:487px;width:9px;height:1px;background:#7a7a7a;"></div>
<div style="left:1902px;top:488px;width:9px;height:1px;background:#fdfdfd;"></div>
<div style="left:1902px;top:490px;width:9px;height:1px;background:#7a7a7a;"></div>
<div style="left:1902px;top:491px;width:9px;height:1px;background:#fdfdfd;"></div>
<svg style="left:1902px;top:1008px" width="9" height="6" viewBox="0 0 9 6"><path d="M0 .5L4.500 5.500 9 .5z" fill="#4d4d4d"/></svg>
<div style="left:8px;top:1021px;width:1890px;height:16px;background:linear-gradient(180deg,#e3e3e3,#f3f3f3 40%,#f0f0f0);"></div>
<div style="left:1898px;top:1021px;width:16px;height:16px;background:#f0f0f0;"></div>
<svg style="left:13px;top:1025px" width="6" height="9" viewBox="0 0 6 9"><path d="M5.500 0L.5 4.500 5.500 9z" fill="#4d4d4d"/></svg>
<svg style="left:1886px;top:1025px" width="6" height="9" viewBox="0 0 6 9"><path d="M.5 0L5.500 4.500 .5 9z" fill="#4d4d4d"/></svg>
<div style="left:26px;top:1022px;width:1823px;height:15px;border:1px solid #979797;border-radius:2px;background:linear-gradient(180deg,#f4f4f4 0%,#e6e6e8 45%,#cfcfd4 55%,#dadade 100%);"></div>
<div style="left:933px;top:1025px;width:1px;height:8px;background:#7a7a7a;"></div>
<div style="left:934px;top:1025px;width:1px;height:8px;background:#fdfdfd;"></div>
<div style="left:936px;top:1025px;width:1px;height:8px;background:#7a7a7a;"></div>
<div style="left:937px;top:1025px;width:1px;height:8px;background:#fdfdfd;"></div>
<div style="left:939px;top:1025px;width:1px;height:8px;background:#7a7a7a;"></div>
<div style="left:940px;top:1025px;width:1px;height:8px;background:#fdfdfd;"></div>
<div style="left:1910px;top:1033px;width:2px;height:2px;background:#b8b8b8;"></div>
<div style="left:1906px;top:1033px;width:2px;height:2px;background:#b8b8b8;"></div>
<div style="left:1902px;top:1033px;width:2px;height:2px;background:#b8b8b8;"></div>
<div style="left:1910px;top:1029px;width:2px;height:2px;background:#b8b8b8;"></div>
<div style="left:1906px;top:1029px;width:2px;height:2px;background:#b8b8b8;"></div>
<div style="left:1910px;top:1025px;width:2px;height:2px;background:#b8b8b8;"></div>
</body></html>
